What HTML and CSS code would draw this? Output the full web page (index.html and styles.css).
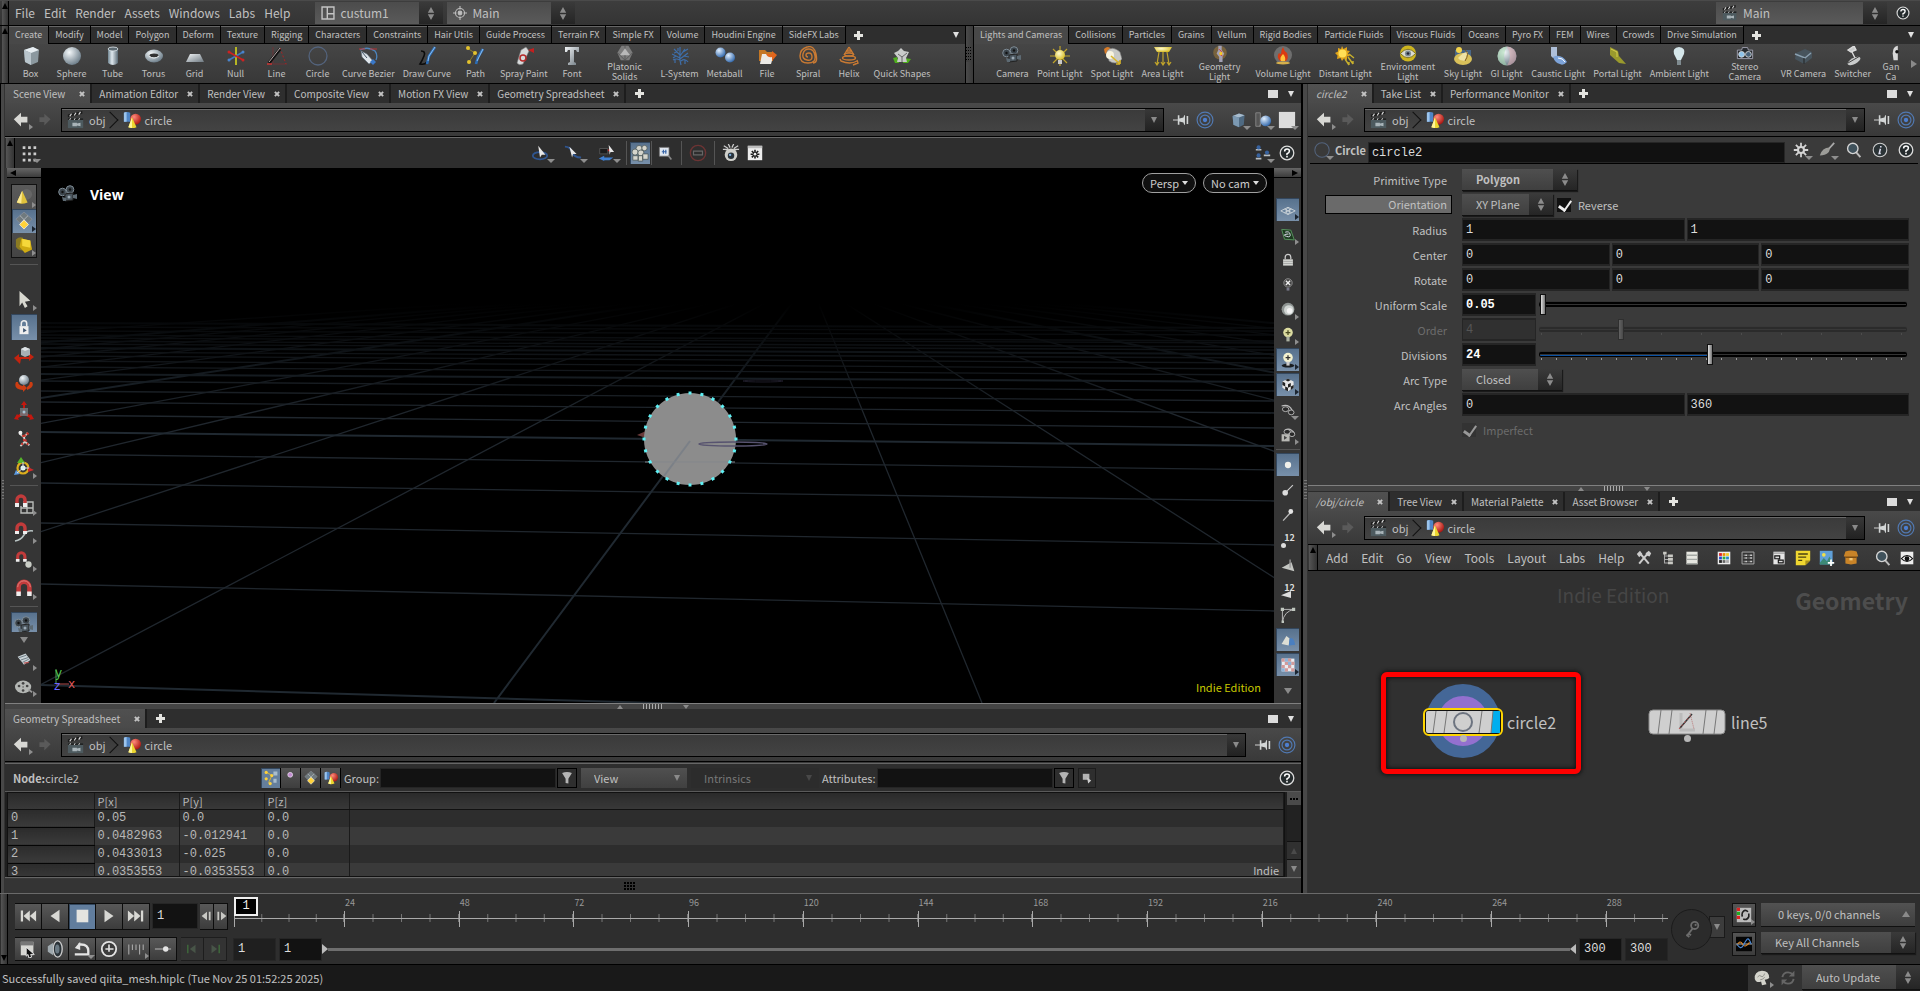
FILE: index.html
```html
<!DOCTYPE html>
<html lang="en">
<head>
<meta charset="utf-8">
<title>qiita_mesh.hiplc</title>
<link rel="stylesheet" href="styles.css">
</head>
<body>
<svg class="defs" aria-hidden="true">
  <defs>
    <linearGradient id="gs" x1="0" y1="0" x2="1" y2="1"><stop offset="0" stop-color="#f2f5f7"/><stop offset="1" stop-color="#6d7880"/></linearGradient>
    <linearGradient id="gt" x1="0" y1="0" x2="1" y2="0"><stop offset="0" stop-color="#6f8490"/><stop offset=".4" stop-color="#dfe8ee"/><stop offset="1" stop-color="#5a6a75"/></linearGradient>
    <radialGradient id="gb" cx=".35" cy=".3" r=".75"><stop offset="0" stop-color="#f4f8fa"/><stop offset="1" stop-color="#697a86"/></radialGradient>
    <radialGradient id="gblue" cx=".35" cy=".3" r=".75"><stop offset="0" stop-color="#e2f0ff"/><stop offset="1" stop-color="#2c63a8"/></radialGradient>
    <radialGradient id="gred" cx=".35" cy=".3" r=".75"><stop offset="0" stop-color="#ff8a7a"/><stop offset="1" stop-color="#a81410"/></radialGradient>
    <radialGradient id="gyel" cx=".4" cy=".35" r=".7"><stop offset="0" stop-color="#fffbd0"/><stop offset="1" stop-color="#d6b91c"/></radialGradient>
    <linearGradient id="fade" x1="0" y1="0" x2="0" y2="1"><stop offset="0" stop-color="#000"/><stop offset=".24" stop-color="#000"/><stop offset=".5" stop-color="#000" stop-opacity=".6"/><stop offset="1" stop-color="#000" stop-opacity="0"/></linearGradient>
  </defs>
  <symbol id="box" viewBox="0 0 20 20"><path d="M3 4l9-3 6 3-1 12-7 3-6-3z" fill="#8b989f"/><path d="M3 4l9-3 6 3-8 3z" fill="#e6edf1"/><path d="M3 4l7 3v12l-6-3z" fill="#b9c5cc"/></symbol>
  <symbol id="sphere" viewBox="0 0 20 20"><circle cx="10" cy="10" r="9" fill="url(#gb)"/></symbol>
  <symbol id="tube" viewBox="0 0 20 20"><path d="M5 3v14q5 4 10 0V3z" fill="url(#gt)"/><ellipse cx="10" cy="3" rx="5" ry="2" fill="#5d6a72" stroke="#dfe8ee" stroke-width=".8"/></symbol>
  <symbol id="torus" viewBox="0 0 20 20"><ellipse cx="10" cy="10" rx="9" ry="6.500" fill="url(#gb)"/><ellipse cx="10" cy="9.500" rx="4.500" ry="2" fill="#333"/><path d="M5 10q5 4 10 0" fill="none" stroke="#eef3f5"/></symbol>
  <symbol id="grid" viewBox="0 0 20 20"><path d="M5 8h10l4 8H1z" fill="url(#gs)"/></symbol>
  <symbol id="null" viewBox="0 0 20 20"><path d="M10 1v18" stroke="#b6b624" stroke-width="2"/><path d="M3 14L17 6" stroke="#3d78c2" stroke-width="1.500"/><path d="M3 6l14 8" stroke="#c22" stroke-width="1.500"/><circle cx="3" cy="6" r="1.500" fill="#c22"/><circle cx="17" cy="14" r="1.500" fill="#c22"/><circle cx="3" cy="14" r="1.500" fill="#4a84cc"/><circle cx="17" cy="6" r="1.500" fill="#4a84cc"/></symbol>
  <symbol id="line" viewBox="0 0 20 20"><path d="M6 1v17h14" fill="none" stroke="#6d3336"/><path d="M13 2l6 16" stroke="#a22" stroke-dasharray="2 2"/><path d="M2 17L13 3" stroke="#111" stroke-width="3"/><path d="M2 16L13 2" stroke="#b9a9a9" stroke-width="1"/><path d="M0 18h5" stroke="#c33" stroke-width="1.500"/></symbol>
  <symbol id="circ" viewBox="0 0 20 20"><circle cx="10" cy="10" r="9" fill="none" stroke="#53637c" stroke-width="1.300"/></symbol>
  <symbol id="bezier" viewBox="0 0 20 20"><path d="M2 4q8-4 15 1 3 4 1 9" fill="none" stroke="#4d85bd" stroke-width="1.300"/><path d="M1 3h6M12 3h7" stroke="#b33"/><path d="M3 5l6 3 6 7-4 3-7-7z" fill="#dfe5ea" stroke="#5c6c7a" stroke-width=".6"/><path d="M4 6l5 6" stroke="#456"/><path d="M12 16l3 3 3-3-3-3z" fill="#3a78c8"/></symbol>
  <symbol id="draw" viewBox="0 0 20 20"><path d="M4 5q5 0 3 5t-4 8q5 1 7-2" fill="none" stroke="#0b0b0b" stroke-width="1.600"/><path d="M18 1l-6 9-2 8" stroke="#2b6cb5" stroke-width="2.600" fill="none"/><path d="M18 1l-6 9-1 5" stroke="#8fc0ee" stroke-width="1" fill="none"/></symbol>
  <symbol id="pathi" viewBox="0 0 20 20"><path d="M2 2l8 5-6 9" fill="none" stroke="#8b7a2a"/><circle cx="3" cy="2" r="2" fill="#e3c22d"/><circle cx="10" cy="7" r="2" fill="#e3c22d"/><circle cx="4" cy="16" r="2" fill="#e3c22d"/><path d="M18 3l-5 8-2 7" stroke="#2b6cb5" stroke-width="2.600" fill="none"/><path d="M18 3l-6 12" stroke="#8fc0ee" stroke-width="1"/></symbol>
  <symbol id="spray" viewBox="0 0 20 20"><path d="M7 4l5-3 3 4-6 13q-4 2-6-1z" fill="#d7dadb" stroke="#777" stroke-width=".6"/><circle cx="9" cy="12" r="3" fill="none" stroke="#b52a2a" stroke-width="1.500"/><path d="M14 4l6-2v5z" fill="#c41f1f"/></symbol>
  <symbol id="fonti" viewBox="0 0 20 20"><path d="M3 1h14v5h-2l-1-2h-2v12l2 1v2H6v-2l2-1V4H6L5 6H3z" fill="url(#gs)"/></symbol>
  <symbol id="plat" viewBox="0 0 20 20"><path d="M6 1h8l5 8-4 9H5L1 9z" fill="#7c7c7c"/><path d="M10 4l6 8H4z" fill="#b9b9b9"/><path d="M10 4V1M16 12l3-3M4 12L1 9M10 12v6M4 12l6 6 6-6" stroke="#555" fill="none"/></symbol>
  <symbol id="lsys" viewBox="0 0 20 20"><path d="M11 19q-2-6-1-11V1M10 9L4 3M10 12L2 8M10 14q-4-2-7 0M10 10l5-7M10 13l8-6M11 15q4-3 7 1M7 6L4 7M6 10l-3 2M13 6l5-3M14 10l5 1M5 13v4M15 14v4M8 5l0-3" fill="none" stroke="#3e6ea9" stroke-width="1.200"/></symbol>
  <symbol id="meta" viewBox="0 0 20 20"><circle cx="5.500" cy="6.500" r="5" fill="url(#gblue)"/><circle cx="15" cy="11.500" r="5" fill="url(#gblue)"/></symbol>
  <symbol id="file" viewBox="0 0 20 20"><path d="M2 4h6l2 2h6v9H2z" fill="#c47725"/><path d="M3 18L5 8h12l-3 10z" fill="#eceae5"/><path d="M9 8h6V5l5 4-5 6v-4q-4 1-6-3z" fill="#e2661c"/></symbol>
  <symbol id="spiral" viewBox="0 0 20 20"><path d="M10 11q-2 0-2-2t3-2 3 4-5 3-4-6 6-5 6 7-7 7-8-7 7-9 9 7-3 9" fill="none" stroke="#c97a33" stroke-width="1.400"/></symbol>
  <symbol id="helix" viewBox="0 0 20 20"><g fill="none" stroke="#c97a33" stroke-width="1.400"><path d="M10 1L5 9M10 1l5 8"/><ellipse cx="10" cy="5" rx="2.500" ry="1"/><ellipse cx="10" cy="8.500" rx="4.500" ry="1.500"/><ellipse cx="10" cy="12" rx="6.500" ry="2"/><path d="M18 15q-7 4-16 0l-1-2M18 14l1 3-5 2"/></g></symbol>
  <symbol id="quick" viewBox="0 0 20 20"><path d="M1 12l4-1 2 6H3zM12 12l7 1-3 4h-5z" fill="#4fae1e"/><path d="M6 5l3-3 3 3 5 1-3 6 1 4H5l1-4-4-5z" fill="#c9cbca"/><path d="M6 8l4 3 5-4M10 11v5" stroke="#666" fill="none"/></symbol>
  <symbol id="cam" viewBox="0 0 20 20"><circle cx="4.500" cy="7" r="3.800" fill="#3b444b" stroke="#7f8c96"/><circle cx="12" cy="4.500" r="3.800" fill="#3b444b" stroke="#7f8c96"/><circle cx="12" cy="4.500" r="1.200" fill="#111"/><circle cx="4.500" cy="7" r="1.200" fill="#111"/><path d="M7 9l8-1v7l-8 1z" fill="#4b565e" stroke="#222"/><path d="M15 10l4-1v5l-4-1zM4 12l4 1v3H5z" fill="#5d6a73"/><circle cx="11" cy="12" r="1.500" fill="#9aa8b3"/></symbol>
  <symbol id="ptl" viewBox="0 0 20 20"><path d="M10 0v20M0 10h20M3 3l14 14M17 3L3 17" stroke="#bfa32b" stroke-width="1.200"/><circle cx="10" cy="9" r="5" fill="url(#gyel)"/><path d="M8 14h4v4H8z" fill="#c9c9c9"/></symbol>
  <symbol id="spot" viewBox="0 0 20 20"><path d="M2 3q4-4 7 0L3 8z" fill="#d97c28"/><path d="M5 5q5-6 13 1l2 7q-6 7-13 2z" fill="#c8c9c6" stroke="#777" stroke-width=".6"/><circle cx="8" cy="9" r="4" fill="#f7f3df"/><path d="M9 10l9 8M18 18v-4M18 18h-4" stroke="#d8b52a" stroke-width="1.600"/></symbol>
  <symbol id="area" viewBox="0 0 20 20"><path d="M1 1h18l-3 5H4z" fill="url(#gyel)"/><path d="M6 6L4 18M10 6v12M14 6l2 12M2 16l2 3 2-3M8 16l2 3 2-3M14 16l2 3 2-3" fill="none" stroke="#bfa32b" stroke-width="1.200"/></symbol>
  <symbol id="geol" viewBox="0 0 20 20"><circle cx="10" cy="9" r="8" fill="#b98a35" opacity=".45"/><path d="M8 1h4v5l3 4-2 4v6H9v-6l-3-4 2-4z" fill="#a3a0b3"/><path d="M9 5l3 3-2 3 3 2" stroke="#d22" fill="none"/><circle cx="11" cy="10" r="2" fill="#f5c62a"/></symbol>
  <symbol id="voll" viewBox="0 0 20 20"><circle cx="10" cy="9" r="9" fill="#6e6e6e"/><path d="M10 1q1 4 4 6 2 5-1 8H7q-4-4-1-8 1 1 2 1 0-4 2-7z" fill="#d93a12"/><path d="M10 8q3 3 2 7H8q-2-3 2-7z" fill="#ffc23a"/><ellipse cx="10" cy="17" rx="7" ry="1.500" fill="#d6b04b"/></symbol>
  <symbol id="dist" viewBox="0 0 20 20"><path d="M7 0l1.500 3L12 1l0 3.500 3 .5-2 2.500 2 2.500-3 .5V14l-3-1.500L7 15l-1.500-3L2 13l.500-3.500L0 7l3-1.500V2l3 1z" fill="#e0a41a"/><circle cx="7.500" cy="7.500" r="4" fill="#ffdf56"/><path d="M10 13l4 6M13 11l5 7M14 8l5 4M14 19v-3M18 18v-3" stroke="#c9b12c" stroke-width="1.400"/></symbol>
  <symbol id="env" viewBox="0 0 20 20"><circle cx="10" cy="10" r="9.500" fill="#cdb51f"/><path d="M1 10Q10 0 19 10 10 20 1 10z" fill="#dcdcd2" stroke="#6f6414"/><circle cx="10" cy="10" r="3.600" fill="#7d8d95"/><circle cx="10" cy="10" r="1.600" fill="#223"/></symbol>
  <symbol id="sky" viewBox="0 0 20 20"><path d="M2 4h16v6H2z" fill="#4f81b8" opacity=".6"/><circle cx="6" cy="4" r="3" fill="#f3d34b"/><ellipse cx="10" cy="13" rx="9" ry="6" fill="#d9c15a"/><path d="M5 12q6-7 10-6l-3 9-5-1z" fill="#efe3a4"/><path d="M12 4q5 3 0 11" stroke="#7c5a22" fill="none"/></symbol>
  <symbol id="gi" viewBox="0 0 20 20"><circle cx="10" cy="10" r="9.500" fill="url(#gb)"/><path d="M10 .500a9.500 9.500 0 010 19q6-9 0-19z" fill="#e5a9b0" opacity=".5"/><path d="M10 .500a9.500 9.500 0 000 19q-6-9 0-19z" fill="#a5dcae" opacity=".5"/></symbol>
  <symbol id="caus" viewBox="0 0 20 20"><path d="M3 1h6v9l-4 2-2-2z" fill="#aebfd9"/><path d="M5 11q8-4 14 5-4 4-7 2-5-1-7-7z" fill="#7da3d8"/><path d="M10 12q5 0 7 4" stroke="#fff" fill="none"/></symbol>
  <symbol id="port" viewBox="0 0 20 20"><path d="M3 1l8 4 1 5 7 8-7-1-9-8z" fill="#9a9a2d"/><path d="M4 3l6 3v5" fill="none" stroke="#d6cf4f"/></symbol>
  <symbol id="amb" viewBox="0 0 20 20"><path d="M10 1q7 1 5 7l-3 6H8L5 8q-2-6 5-7z" fill="#d5e6ea"/><path d="M8 14h4v5H8z" fill="#7f8b90"/></symbol>
  <symbol id="ster" viewBox="0 0 20 20"><path d="M1 6h5l1-3h6l1 3h5v10H1z" fill="#262a2e" stroke="#aab"/><circle cx="6" cy="11" r="3.400" fill="#8ec3ea" stroke="#ddd"/><circle cx="14" cy="11" r="3.400" fill="#48627a" stroke="#ddd"/></symbol>
  <symbol id="vr" viewBox="0 0 20 20"><path d="M3 7l9-4 7 3v6l-8 6-9-5z" fill="#47545d"/><path d="M2 8l10 4 6-5" fill="none" stroke="#8ba0b0" stroke-width="1.500"/><path d="M11 12v6" stroke="#222"/></symbol>
  <symbol id="swi" viewBox="0 0 20 20"><path d="M5 4l6-4 2 4-5 2zM9 6l3 6" fill="#c9cbcb" stroke="#ddd" stroke-width="1.400"/><ellipse cx="11" cy="15" rx="7" ry="3" transform="rotate(-28 11 15)" fill="#c9cbcb"/><path d="M5 17l12-7" stroke="#444"/></symbol>
  <symbol id="game" viewBox="0 0 20 20"><path d="M18 1q-6 1-6 9l1 8h5z" fill="#d9d9d9"/><circle cx="17" cy="8" r="2" fill="#111"/></symbol>
  <symbol id="layout" viewBox="0 0 20 20"><path d="M1.500 1.500h17v17h-17zM9 1.500v17M9 11h9.500" fill="none" stroke="#c4c4c4" stroke-width="2"/></symbol>
  <symbol id="cross" viewBox="0 0 20 20"><g fill="none" stroke="#bdbdbd" stroke-width="1.600"><circle cx="10" cy="10" r="6.500"/><circle cx="10" cy="10" r="2.600" fill="#bdbdbd"/><path d="M10 0v5M10 15v5M0 10h5M15 10h5"/></g></symbol>
  <symbol id="clap" viewBox="0 0 20 20"><path d="M1 8h17v11H1z" fill="#4d5a5f"/><path d="M1 4l16-4v3L1 7z" fill="#1b1b1b"/><path d="M3 6l2-3M8 5l2-3M13 4l2-3" stroke="#ddd" stroke-width="1.300"/><path d="M1 8h17v2H1z" fill="#222"/><path d="M3 10l1-2M8 10l1-2M13 10l1-2" stroke="#ddd"/><path d="M6 13h5v4H6zM11 14l4-1v4l-4-1z" fill="#a9b4b9"/></symbol>
  <symbol id="shapes" viewBox="0 0 20 20"><path d="M1 2q4-2 7 0v10H1z" fill="#4f86c7"/><path d="M1 2q1-1 3-1v11H1z" fill="#9cc4ec"/><circle cx="14" cy="9" r="6" fill="url(#gred)"/><path d="M10 7l5 11q-5 2-9 0z" fill="#ecd62f"/><path d="M10 7v12l-4-1z" fill="#fff69b"/></symbol>
  <symbol id="back" viewBox="0 0 20 20"><path d="M1 9l9-8v5h8v7h-8v5z" fill="#d8d8d4"/></symbol>
  <symbol id="fwd" viewBox="0 0 20 20"><path d="M18 9l-9-8v5H2v7h7v5z" fill="#5a5a5a"/></symbol>
  <symbol id="pin" viewBox="0 0 20 20"><path d="M0 10h7" stroke="#ccc" stroke-width="1.300"/><path d="M6 4h2v4l5-1 1-3h1v12h-1l-1-3-5-1v4H6zM17 5h2v10h-2z" fill="#d2d5d5"/></symbol>
  <symbol id="target" viewBox="0 0 20 20"><g fill="none" stroke="#5179b2" stroke-width="1.300"><circle cx="10" cy="10" r="8.800"/><circle cx="10" cy="10" r="5.500"/></g><circle cx="10" cy="10" r="2.400" fill="#4d7fd0"/></symbol>
  <symbol id="bcube" viewBox="0 0 20 20"><path d="M2 5l8-3 7 2-1 12-6 3-7-3z" fill="#4f6a82"/><path d="M2 5l8-3 7 2-7 3z" fill="#a8bccd"/><path d="M2 5l8 2v12l-7-3z" fill="#7c99b2"/></symbol>
  <symbol id="ghost" viewBox="0 0 20 20"><path d="M2 2h5v15H2zM6 17l5-9" fill="#555" stroke="#888"/><circle cx="13" cy="11" r="6" fill="url(#gblue)"/></symbol>
  <symbol id="white" viewBox="0 0 20 20"><path d="M1 1h18v18H1z" fill="#dcdcdc"/></symbol>
  <symbol id="dots" viewBox="0 0 20 20"><path d="M3 4h15M3 11h15M3 18h15" stroke="#ccc" stroke-width="3" stroke-dasharray="3 3"/></symbol>
  <symbol id="orb" viewBox="0 0 20 20"><ellipse cx="10" cy="13" rx="8" ry="4" fill="none" stroke="#2f5590" stroke-width="2"/><path d="M8 2l8 10-4 0-2 3z" fill="#e8e8e8"/></symbol>
  <symbol id="pan" viewBox="0 0 20 20"><path d="M1 3q6 0 8 6t10 6" fill="none" stroke="#2f5590" stroke-width="2"/><path d="M6 3l8 8-4 0-1 4z" fill="#e8e8e8"/></symbol>
  <symbol id="dolly" viewBox="0 0 20 20"><path d="M3 5h9v6H3z" fill="#1b1b1b" stroke="#555"/><path d="M12 7h3" stroke="#b22" stroke-width="2"/><path d="M2 16l6-3v2h10l-4 3H8v1z" fill="#3f7fd0"/><path d="M13 1l6 8-4 0-1 3z" fill="#e8e8e8"/></symbol>
  <symbol id="cubes" viewBox="0 0 20 20"><g fill="#d5d5cc" stroke="#4e5a5c" stroke-width=".9"><circle cx="9" cy="5" r="3.400"/><circle cx="15" cy="4.500" r="3"/><circle cx="4.500" cy="9" r="3.400"/><circle cx="11" cy="10" r="3.400"/><path d="M2 13h6v5H2zM8 13h5v6H8zM13 11h6v6h-6z"/></g></symbol>
  <symbol id="zoomr" viewBox="0 0 20 20"><path d="M3 3h12v11H3z" fill="#dfe6ee" stroke="#777"/><path d="M6 8.500h6M8 6v5M11 6v5" stroke="#3462a6" stroke-width="1.400"/><path d="M14 13l4 5" stroke="#888" stroke-width="2"/></symbol>
  <symbol id="stopr" viewBox="0 0 20 20"><circle cx="10" cy="10" r="8.500" fill="none" stroke="#6d3434" stroke-width="1.500"/><path d="M5 8h10v4H5z" fill="none" stroke="#666" stroke-width="1.300"/></symbol>
  <symbol id="bug" viewBox="0 0 20 20"><path d="M2 2l5 3M18 2l-5 3M1 6l6 0M19 6h-6M7 0l2 4M13 0l-2 4" stroke="#ccc" stroke-width="1.400"/><circle cx="10" cy="12" r="7" fill="#cfcfca"/><circle cx="10" cy="13" r="3.600" fill="#28323a"/><circle cx="9" cy="12" r="1.300" fill="#7fb0de"/></symbol>
  <symbol id="gearw" viewBox="0 0 20 20"><path d="M1 1h18v18H1z" fill="#ececec"/><path d="M1 1h18v3H1z" fill="#bbb"/><path d="M10 6v11M4.500 11.500h11M6 7.500l8 8M14 7.500l-8 8" stroke="#1a1a1a" stroke-width="2"/><circle cx="10" cy="11.500" r="1.700" fill="#ececec"/></symbol>
  <symbol id="people" viewBox="0 0 20 20"><g fill="#b9bfc4"><path d="M1 7h7v-2H1zM1 18h7v-2H1zM11 14h8v-2h-8z"/></g><circle cx="4.500" cy="3" r="2.600" fill="#37629f"/><circle cx="4.500" cy="13" r="2.600" fill="#37629f"/><circle cx="15" cy="9.500" r="2.600" fill="#37629f"/></symbol>
  <symbol id="help" viewBox="0 0 20 20"><circle cx="10" cy="10" r="8.500" fill="#252b2d" stroke="#dcdcdc" stroke-width="1.600"/><path d="M7 8q0-3 3-3t3 2.500-3 3.500v1.500M10 13.500v2" fill="none" stroke="#fff" stroke-width="1.900"/></symbol>
  <symbol id="info" viewBox="0 0 20 20"><circle cx="10" cy="10" r="8.500" fill="#2b3336" stroke="#cfcfcf" stroke-width="1.400"/><path d="M11 5v2M10.500 8.500L9 14.500h2" fill="none" stroke="#dde" stroke-width="1.900"/></symbol>
  <symbol id="gear" viewBox="0 0 20 20"><path d="M10 1v18M1 10h18M3.600 3.600l12.800 12.800M16.400 3.600L3.600 16.400" stroke="#d4d4d4" stroke-width="2.200"/><circle cx="10" cy="10" r="5" fill="#d4d4d4"/><circle cx="10" cy="10" r="2.400" fill="#3a3a3a"/></symbol>
  <symbol id="brush" viewBox="0 0 20 20"><path d="M19 1l-8 9" stroke="#aaa" stroke-width="2.200"/><path d="M13 7q2 9-12 10 3-10 12-10z" fill="#9c9c98"/></symbol>
  <symbol id="mag" viewBox="0 0 20 20"><path d="M12 12l6 7" stroke="#bdbdbd" stroke-width="2.400"/><circle cx="8.500" cy="8" r="6.500" fill="#40525c" stroke="#d5d5d5" stroke-width="1.700"/></symbol>
  <symbol id="selobj" viewBox="0 0 20 20"><circle cx="13" cy="7" r="6" fill="#666"/><path d="M8 3l6 13q-7 3-12 0z" fill="#e0c23c"/><path d="M8 3l-1 14-5-1z" fill="#fbe994"/></symbol>
  <symbol id="selpt" viewBox="0 0 20 20"><path d="M10 0l9 8-9 9-9-9z" fill="#707a7e" stroke="#aab" stroke-width=".4"/><path d="M5.500 4l9 9M14.500 4l-9 9" stroke="#b5babd"/><path d="M10 9l5 5-5 5-5-5z" fill="#ffd23a" stroke="#fff" stroke-width=".7"/></symbol>
  <symbol id="seldy" viewBox="0 0 20 20"><path d="M1 4q4-4 8-2v14q-6 0-8-4z" fill="#8b7b22"/><path d="M7 3l10 2 2 10-8 4-6-7z" fill="#cfab12"/><path d="M8 3l9 2 0 8-9-2z" fill="#f5d83a"/></symbol>
  <symbol id="arrow" viewBox="0 0 20 20"><path d="M5 1l12 11-6 1 3 5-3 2-3-6-3 4z" fill="#d8d8d0"/></symbol>
  <symbol id="lockw" viewBox="0 0 20 20"><path d="M7 9V6a3 3 0 016 0v3" fill="none" stroke="#eee" stroke-width="1.700"/><path d="M5 9h10v9H5z" fill="#eee"/><path d="M9 11l4 3-4 2z" fill="#3e5570"/></symbol>
  <symbol id="mv" viewBox="0 0 20 20"><path d="M0 13l5-4v3h10l0-4 5 4-5 4v-2H7l-1 5z" fill="#c3230f"/><path d="M7 4l4-2 5 2v6l-5 2-4-2z" fill="#a7b1b6"/><path d="M7 4l4-2 5 2-5 2z" fill="#dde3e6"/></symbol>
  <symbol id="rot" viewBox="0 0 20 20"><path d="M2 9q-3 7 7 8l0 2 4-4-4-4v2q-5-1-5-4zM18 9q3 5-5 8v-3q3-2 3-5z" fill="#cc3d12"/><circle cx="10" cy="7" r="5" fill="url(#gb)"/></symbol>
  <symbol id="scl" viewBox="0 0 20 20"><path d="M10 0l3 4h-2v7l5 3 1-1 3 5-5 1 1-2-6-3-6 3 1 2-5-1 3-5 1 1 5-3V4H7z" fill="#c3180f"/><path d="M6 7h8v8H6z" fill="#70777b" opacity=".85"/><circle cx="10" cy="11" r="1.500" fill="#a9c3d6"/></symbol>
  <symbol id="pose" viewBox="0 0 20 20"><path d="M5 4l5 4 4-5M10 8l1 5-5 5M11 13l5 4" fill="none" stroke="#d0d0cc" stroke-width="2"/><path d="M8 7l4-1M9 11l4 1M7 15l2 1M13 15l2 1M13 3l2 2" stroke="#c6332a" stroke-width="2.400"/><circle cx="6" cy="3" r="2.200" fill="#eee"/></symbol>
  <symbol id="hnd" viewBox="0 0 20 20"><circle cx="9" cy="11" r="5.500" fill="none" stroke="#dcae1e" stroke-width="2.200"/><path d="M7 0l4 6H3z" fill="#55b52a"/><path d="M20 13l-6-3v5z" fill="#cc2a2a"/><path d="M0 18l2-5 4 4z" fill="#5b9ae0"/><circle cx="9" cy="11" r="2.500" fill="#dfe"/><path d="M9 11V5M9 11h6M9 11l-6 5" stroke="#dde"/></symbol>
  <symbol id="magnet" viewBox="0 0 20 20"><path d="M4 17V9a6 6 0 0112 0v8" fill="none" stroke="#c23b3b" stroke-width="5"/><path d="M3 9a7 7 0 0114 0" fill="none" stroke="#e58a84" stroke-width="1"/><path d="M1.500 14h5v5h-5zM13.500 14h5v5h-5z" fill="#eee"/></symbol>
  <symbol id="mgrid" viewBox="0 0 20 20"><path d="M9 8h10v11H7V12M7 14h12M13 8v11" fill="none" stroke="#b9bcb9" stroke-width="1.400"/><path d="M3 11V6a4 4 0 018 0v5" fill="none" stroke="#c23b3b" stroke-width="3.400"/><path d="M1 9h4v4H1zM9 9h4v4H9z" fill="#eee"/></symbol>
  <symbol id="mcurve" viewBox="0 0 20 20"><path d="M1 19q6-1 9-6t9-4" fill="none" stroke="#b9c4c4" stroke-width="1.500"/><path d="M3 10V6a4 4 0 018 0v4" fill="none" stroke="#c23b3b" stroke-width="3.400"/><path d="M1 9h4v3H1zM9 9h4v3H9z" fill="#eee"/></symbol>
  <symbol id="mpt" viewBox="0 0 20 20"><circle cx="15" cy="15" r="3.500" fill="#c9cdc6"/><path d="M3 10V6a4 4 0 018 0v4" fill="none" stroke="#c23b3b" stroke-width="3.400"/><path d="M1 9h4v3H1zM9 9h4v3H9z" fill="#eee"/></symbol>
  <symbol id="clip" viewBox="0 0 20 20"><path d="M2 6l10-4 6 8-8 6z" fill="#c9d2d6"/><path d="M4 7l9-3M6 10l9-3M8 13l8-4" stroke="#5b6b73"/><path d="M10 14l6-1" stroke="#b55" stroke-width="1.500"/></symbol>
  <symbol id="reel" viewBox="0 0 20 20"><ellipse cx="9" cy="11" rx="9" ry="7" fill="#b4b7b4"/><g fill="#444"><circle cx="9" cy="7" r="1.500"/><circle cx="9" cy="15" r="1.500"/><circle cx="4.500" cy="10" r="1.500"/><circle cx="13.500" cy="10" r="1.500"/><circle cx="9" cy="11" r=".8"/></g><path d="M15 14l4 3" stroke="#999" stroke-width="2"/></symbol>
  <symbol id="plane" viewBox="0 0 20 20"><path d="M2 11l8-4 8 4-8 4zM6 9l8 4M14 9l-8 4M10 7q-4 4 0 8 4-4 0-8" fill="none" stroke="#cdd5da"/></symbol>
  <symbol id="cplane" viewBox="0 0 20 20"><path d="M1 2l13 1 5 14-14-1z" fill="#1d3a20" stroke="#5b9a61" stroke-width="1.300"/><path d="M6 6q6-2 7 3t-5 3-1-3 4 0" fill="none" stroke="#dde" stroke-width="1.400"/></symbol>
  <symbol id="lock" viewBox="0 0 20 20"><path d="M6 9V6a4 4 0 018 0v3" fill="none" stroke="#ccc" stroke-width="1.800"/><path d="M3 9h14v9H3z" fill="#d4d6d2"/><path d="M3 12h14M3 15h14" stroke="#999"/></symbol>
  <symbol id="bulbx" viewBox="0 0 20 20"><circle cx="10" cy="7" r="6" fill="#444" stroke="#aaa"/><path d="M7 4l6 6M13 4l-6 6" stroke="#eee" stroke-width="2"/><path d="M8 14h4v4H8z" fill="#778"/></symbol>
  <symbol id="bulb2" viewBox="0 0 20 20"><circle cx="10" cy="9" r="8" fill="#8e9492"/><circle cx="11" cy="10" r="6" fill="#cfd4d2"/><circle cx="12" cy="11" r="3.500" fill="#f3f3f3"/></symbol>
  <symbol id="bulby" viewBox="0 0 20 20"><circle cx="10" cy="7" r="6" fill="#dcdca0"/><path d="M7 7h6M10 4v6" stroke="#4a4a22" stroke-width="1.600"/><path d="M8 12h4v6H8z" fill="#aab0a0"/></symbol>
  <symbol id="bulbs" viewBox="0 0 20 20"><ellipse cx="10" cy="17" rx="8" ry="2.500" fill="#1a1d20"/><circle cx="10" cy="7" r="6" fill="#f3f1cf"/><path d="M7 7h6M10 4v6" stroke="#333" stroke-width="1.600"/><path d="M8 12h4v5H8z" fill="#ccc"/></symbol>
  <symbol id="check" viewBox="0 0 20 20"><path d="M2 5l8-4 8 4v9l-8 5-8-5z" fill="#e6e6e6"/><path d="M6 3l4 2 4-2-4-2zM2 5l4 2v5l-4-2zM10 9l4-2v5l-4 2zM6 12l4 2v5l-4-2zM14 12l4-2v4l-4 3z" fill="#222"/></symbol>
  <symbol id="glass" viewBox="0 0 20 20"><path d="M2 5q9-3 13 5l1 5" fill="none" stroke="#bbb" stroke-width="1.400"/><ellipse cx="7" cy="9" rx="4" ry="3" fill="#2a2a2a" stroke="#ccc"/><ellipse cx="14" cy="13" rx="3.500" ry="3" fill="#2a2a2a" stroke="#ccc"/></symbol>
  <symbol id="glass2" viewBox="0 0 20 20"><path d="M6 4q7-4 12 4" fill="none" stroke="#bbb" stroke-width="1.400"/><ellipse cx="9" cy="6" rx="4" ry="3" fill="#2a2a2a" stroke="#ccc"/><ellipse cx="15" cy="9" rx="3.500" ry="3" fill="#2a2a2a" stroke="#ccc"/><path d="M2 9h10v9H2z" fill="#b8b8b4"/><path d="M5 11l4 2.500-4 2.500z" fill="#444"/></symbol>
  <symbol id="pt" viewBox="0 0 20 20"><circle cx="10" cy="10" r="3.500" fill="#f0f0ea"/></symbol>
  <symbol id="ptn" viewBox="0 0 20 20"><path d="M7 13L17 3" stroke="#ccc" stroke-width="1.600"/><circle cx="6" cy="14" r="4" fill="#ddd"/></symbol>
  <symbol id="ptv" viewBox="0 0 20 20"><path d="M3 18L14 6" stroke="#bbb" stroke-width="1.800"/><circle cx="14" cy="5" r="3.400" fill="#e4e4e4"/></symbol>
  <symbol id="prim" viewBox="0 0 20 20"><path d="M1 14l14-8 4 13z" fill="#c4c6c2"/><path d="M13 14V2" stroke="#999" stroke-width="2"/></symbol>
  <symbol id="hull" viewBox="0 0 20 20"><path d="M3 19V3h15M3 19q2-14 15-16" fill="none" stroke="#bbb" stroke-width="1.200"/><path d="M1 1h4v4H1zM15 1h4v4h-4zM2 17h3v3H2z" fill="#bfc6be"/></symbol>
  <symbol id="face" viewBox="0 0 20 20"><path d="M2 15L8 5l4 3-1 9z" fill="#ddded5"/><path d="M12 8q5-3 7 8l-8 1z" fill="#4a7fc0"/></symbol>
  <symbol id="chk2" viewBox="0 0 20 20"><path d="M2 2h16v16H2z" fill="#e9edf2"/><path d="M2 2h4v4H2zM10 2h4v4h-4zM6 6h4v4H6zM14 6h4v4h-4zM2 10h4v4H2zM10 10h4v4h-4zM6 14h4v4H6zM14 14h4v4h-4z" fill="#d39a9a"/><path d="M6 2h4v4H6zM2 14h4v4H2zM10 6h4v4h-4z" fill="#8fb4d8"/></symbol>
  <symbol id="spts" viewBox="0 0 20 20"><path d="M5 3l6 4-4 9" fill="none" stroke="#e8c02c"/><g fill="#ffd23a"><circle cx="4" cy="3" r="2"/><circle cx="11" cy="7" r="2"/><circle cx="4" cy="11" r="2"/><circle cx="9" cy="17" r="2"/></g><path d="M13 2h5v5h-5zM13 11h4v5h-4z" fill="#a9bdcc"/></symbol>
  <symbol id="svtx" viewBox="0 0 20 20"><circle cx="9" cy="6" r="3" fill="#c28bd0" stroke="#eadcf0"/></symbol>
  <symbol id="funnel" viewBox="0 0 20 20"><path d="M3 3q7-3 14 0l-5 8v7l-4-1v-6z" fill="#b4b4b4"/></symbol>
  <symbol id="menuo" viewBox="0 0 20 20"><path d="M3 3h11v10H3z" fill="#b4b4b4"/><path d="M10 9l7 5-5 5z" fill="#ccc"/></symbol>
  <symbol id="first" viewBox="0 0 20 20"><path d="M2 4h2.500v12H2zM12 4v12l-7-6zM19 4v12l-7-6z" fill="#d8d8d4"/></symbol>
  <symbol id="prev" viewBox="0 0 20 20"><path d="M15 3v14L5 10z" fill="#d8d8d4"/></symbol>
  <symbol id="stop" viewBox="0 0 20 20"><path d="M4 3h13v14H4z" fill="#e4e4e0"/></symbol>
  <symbol id="play" viewBox="0 0 20 20"><path d="M5 3v14l10-7z" fill="#d8d8d4"/></symbol>
  <symbol id="last" viewBox="0 0 20 20"><path d="M18 4h-2.500v12H18zM8 4v12l7-6zM1 4v12l7-6z" fill="#d8d8d4"/></symbol>
  <symbol id="stepb" viewBox="0 0 20 20"><path d="M10 3v14L1 10zM13 3h3v14h-3z" fill="#c8c8c4"/></symbol>
  <symbol id="stepf" viewBox="0 0 20 20"><path d="M10 3v14l9-7zM4 3h3v14H4z" fill="#c8c8c4"/></symbol>
  <symbol id="pref" viewBox="0 0 20 20"><path d="M2 2h14v15H2z" fill="#d6d6d2"/><path d="M2 2h14v4H2z" fill="#777"/><path d="M8 8l9 8-4 0 1 3-3 1-1-4-2 2z" fill="#111" stroke="#eee"/></symbol>
  <symbol id="spk" viewBox="0 0 20 20"><ellipse cx="13" cy="10" rx="5" ry="9" fill="#2b3338" stroke="#ccc" stroke-width="1.500"/><ellipse cx="12.500" cy="10" rx="2.500" ry="5" fill="#6b7a84"/><path d="M8 3L2 7v6l6 4z" fill="#9fa9ae"/></symbol>
  <symbol id="undo" viewBox="0 0 20 20"><path d="M2 16h15v-4q0-7-8-7H6" fill="none" stroke="#e4e4e4" stroke-width="2.600"/><path d="M8 2v9l-6-2z" fill="#e4e4e4"/></symbol>
  <symbol id="clock" viewBox="0 0 20 20"><circle cx="10" cy="10" r="8" fill="#3c3c3c" stroke="#e4e4e4" stroke-width="2"/><path d="M6 10h9M10 5v8" stroke="#e4e4e4" stroke-width="1.800"/></symbol>
  <symbol id="ticks" viewBox="0 0 20 20"><path d="M2 5v11M6 5v6M10 5v6M14 5v11M18 5v6" stroke="#aaa" stroke-width="1.200"/></symbol>
  <symbol id="keyd" viewBox="0 0 20 20"><path d="M1 10h18" stroke="#aaa" stroke-width="1.300"/><circle cx="13" cy="10" r="3" fill="#e4e4e4"/></symbol>
  <symbol id="kf" viewBox="0 0 20 20"><path d="M4 4v12" stroke="#3f6a3b" stroke-width="2"/><path d="M15 4v12l-8-6z" fill="#485548"/></symbol>
  <symbol id="kl" viewBox="0 0 20 20"><path d="M16 4v12" stroke="#3f6a3b" stroke-width="2"/><path d="M5 4v12l8-6z" fill="#485548"/></symbol>
  <symbol id="key" viewBox="0 0 20 20"><g fill="none" stroke="#6c6c6c" stroke-width="2"><circle cx="13" cy="6" r="4"/><path d="M11 9l-7 9M6 15l3 2M4 16l3 3"/></g><circle cx="14" cy="5.500" r="1.200" fill="#6c6c6c"/></symbol>
  <symbol id="chan" viewBox="0 0 20 20"><path d="M1 1h18v18H1z" fill="#bbb"/><path d="M1 1h4v4H1z" fill="#d22"/><path d="M1 6h4v4H1z" fill="#2a2"/><path d="M1 11h4v4H1z" fill="#d22"/><path d="M15 6q-4-4-7 1-1 3 0 5M9 15q5 2 7-3V8" fill="none" stroke="#222" stroke-width="2"/></symbol>
  <symbol id="scope" viewBox="0 0 20 20"><path d="M0 1h20v18H0z" fill="#050505"/><path d="M0 10h20" stroke="#ddd"/><path d="M1 12q4-8 7-2t9-2" fill="none" stroke="#e08a2a" stroke-width="1.400"/><path d="M1 10q5 8 8 2t5-8 5 6" fill="none" stroke="#4a8ad8" stroke-width="1.400"/></symbol>
  <symbol id="brain" viewBox="0 0 20 20"><path d="M2 11q-1-8 8-9 8 0 8 8-2 2-5 2l2 5-5 1-1-4q-5 2-7-3z" fill="#d4d4cc"/><path d="M5 9q2-3 4-1t4-3M8 12q3 0 5-3" fill="none" stroke="#8a8a84"/></symbol>
  <symbol id="refresh" viewBox="0 0 20 20"><path d="M3 9q1-6 7-6 4 0 6 3M17 11q-1 6-7 6-4 0-6-3" fill="none" stroke="#666" stroke-width="2.400"/><path d="M18 1v7h-7zM2 19v-7h7z" fill="#666"/></symbol>
  <symbol id="tools" viewBox="0 0 20 20"><path d="M4 3l12 14M15 4L4 17" stroke="#ccc" stroke-width="2.600"/><path d="M12 4l4-3 3 3-2 4-4-1zM1 5l4-4 3 4-4 4z" fill="#ccc"/></symbol>
  <symbol id="tree" viewBox="0 0 20 20"><path d="M5 2v15h5M5 7h5M5 12h5" fill="none" stroke="#aaa" stroke-width="1.500"/><path d="M3 1h5v4H3zM10 5h7v4h-7zM10 10h7v4h-7zM10 15h7v4h-7z" fill="#c9c9c4"/></symbol>
  <symbol id="rows" viewBox="0 0 20 20"><path d="M2 1h16v18H2z" fill="#e6e6e0"/><path d="M2 6h16M2 12h16M2 18h16" stroke="#a4a8a4" stroke-width="2"/></symbol>
  <symbol id="pal" viewBox="0 0 20 20"><path d="M1 1h18v18H1z" fill="#eee"/><path d="M3 3h4v4H3z" fill="#d22"/><path d="M8 3h4v4H8z" fill="#e80"/><path d="M13 3h4v4h-4z" fill="#ec2"/><path d="M3 8h4v4H3z" fill="#24c"/><path d="M8 8h4v4H8z" fill="#3a3"/><path d="M13 8h4v4h-4z" fill="#28c"/><path d="M3 13h4v4H3z" fill="#222"/><path d="M8 13h4v4H8z" fill="#666"/><path d="M13 13h4v4h-4z" fill="#aaa"/></symbol>
  <symbol id="tbl" viewBox="0 0 20 20"><path d="M1.500 1.500h17v17h-17z" fill="#333" stroke="#aaa" stroke-width="1.400"/><path d="M4 6h5M4 10h5M4 15h5M11 6h5M11 10h5M11 15h5" stroke="#ccc" stroke-width="2" stroke-dasharray="1 1 3 9"/></symbol>
  <symbol id="nbox" viewBox="0 0 20 20"><path d="M2 1h16v18H2z" fill="#e6e6e6"/><path d="M2 3h16" stroke="#666"/><path d="M4 7h7v4H4zM9 13h7v4H9z" fill="#ddd" stroke="#111" stroke-width="1.600"/></symbol>
  <symbol id="note" viewBox="0 0 20 20"><path d="M1 1h18v12l-6 6H1z" fill="#f0d730"/><path d="M4 5h12M4 9h10M4 13h5" stroke="#4a4210" stroke-width="1.600"/><path d="M13 19v-6h6z" fill="#a8901a"/></symbol>
  <symbol id="img" viewBox="0 0 20 20"><path d="M1 1h16v17H1z" fill="#5f9fd8"/><circle cx="6" cy="6" r="2.300" fill="#f0e04a"/><path d="M1 16l5-6 4 4 3-6 4 8v2H1z" fill="#3c8a76"/><path d="M15 12v8M11 16h8" stroke="#fff" stroke-width="2.200"/></symbol>
  <symbol id="pot" viewBox="0 0 20 20"><path d="M3 2q7-3 14 0l2 6H1zM3 8h14v9q-7 2-14 0z" fill="#c98428"/><path d="M3 9h14" stroke="#6e4310" stroke-width="1.600"/><path d="M8 10h4v3H8z" fill="#f0c878"/></symbol>
  <symbol id="eye" viewBox="0 0 20 20"><path d="M1 1h18v18H1z" fill="#ededed"/><path d="M2 11q8-9 16 0-8 8-16 0z" fill="#fff" stroke="#111" stroke-width="1.500"/><circle cx="10" cy="11" r="3.500" fill="#111"/></symbol>
  <symbol id="updn" viewBox="0 0 10 16"><path d="M5 0l4 7H1zM5 16l4-7H1z" fill="#8c8c8c"/></symbol>
</svg>

<header class="menubar">
  <span class="strip"><i class="tri up"></i></span>
  <nav class="menu" aria-label="Main menu">
    <button>File</button><button>Edit</button><button>Render</button><button>Assets</button><button>Windows</button><button>Labs</button><button>Help</button>
  </nav>
  <div class="desk-sel first"><svg class="i14"><use href="#layout"/></svg><select aria-label="Desktop"><option>custum1</option></select><span class="spin"><svg><use href="#updn"/></svg></span></div>
  <div class="desk-sel"><svg class="i14"><use href="#cross"/></svg><select aria-label="Radial menu"><option>Main</option></select><span class="spin"><svg><use href="#updn"/></svg></span></div>
  <div class="desk-sel take"><svg class="i16"><use href="#clap"/></svg><select aria-label="Take"><option>Main</option></select><span class="spin"><svg><use href="#updn"/></svg></span></div>
  <button class="ib" aria-label="Help"><svg class="i14"><use href="#help"/></svg></button>
</header>

<div class="shelves">
  <section class="shelf shelf-a">
    <span class="strip"><i class="tri up"></i></span>
    <div class="shelf-body">
      <div class="stabs"><button class="on">Create</button><button>Modify</button><button>Model</button><button>Polygon</button><button>Deform</button><button>Texture</button><button>Rigging</button><button>Characters</button><button>Constraints</button><button>Hair Utils</button><button>Guide Process</button><button>Terrain FX</button><button>Simple FX</button><button>Volume</button><button>Houdini Engine</button><button>SideFX Labs</button><button class="plus" aria-label="Add shelf"></button><i class="tri dn lite end"></i></div>
      <div class="tools">
        <button><svg><use href="#box"/></svg>Box</button>
        <button><svg><use href="#sphere"/></svg>Sphere</button>
        <button><svg><use href="#tube"/></svg>Tube</button>
        <button><svg><use href="#torus"/></svg>Torus</button>
        <button><svg><use href="#grid"/></svg>Grid</button>
        <button><svg><use href="#null"/></svg>Null</button>
        <button><svg><use href="#line"/></svg>Line</button>
        <button><svg><use href="#circ"/></svg>Circle</button>
        <button><svg><use href="#bezier"/></svg>Curve Bezier</button>
        <button><svg><use href="#draw"/></svg>Draw Curve</button>
        <button><svg><use href="#pathi"/></svg>Path</button>
        <button><svg><use href="#spray"/></svg>Spray Paint</button>
        <button><svg><use href="#fonti"/></svg>Font</button>
        <button class="two"><svg><use href="#plat"/></svg>Platonic<br>Solids</button>
        <button><svg><use href="#lsys"/></svg>L-System</button>
        <button><svg><use href="#meta"/></svg>Metaball</button>
        <button><svg><use href="#file"/></svg>File</button>
        <button><svg><use href="#spiral"/></svg>Spiral</button>
        <button><svg><use href="#helix"/></svg>Helix</button>
        <button><svg><use href="#quick"/></svg>Quick Shapes</button>
      </div>
    </div>
  </section>
  <span class="grip"></span>
  <section class="shelf shelf-b">
    <div class="shelf-body">
      <div class="stabs"><button class="on">Lights and Cameras</button><button>Collisions</button><button>Particles</button><button>Grains</button><button>Vellum</button><button>Rigid Bodies</button><button>Particle Fluids</button><button>Viscous Fluids</button><button>Oceans</button><button>Pyro FX</button><button>FEM</button><button>Wires</button><button>Crowds</button><button>Drive Simulation</button><button class="plus" aria-label="Add shelf"></button><i class="tri dn lite end"></i></div>
      <div class="tools lights">
        <button><svg><use href="#cam"/></svg>Camera</button>
        <button><svg><use href="#ptl"/></svg>Point Light</button>
        <button><svg><use href="#spot"/></svg>Spot Light</button>
        <button><svg><use href="#area"/></svg>Area Light</button>
        <button class="two"><svg><use href="#geol"/></svg>Geometry<br>Light</button>
        <button><svg><use href="#voll"/></svg>Volume Light</button>
        <button><svg><use href="#dist"/></svg>Distant Light</button>
        <button class="two"><svg><use href="#env"/></svg>Environment<br>Light</button>
        <button><svg><use href="#sky"/></svg>Sky Light</button>
        <button><svg><use href="#gi"/></svg>GI Light</button>
        <button><svg><use href="#caus"/></svg>Caustic Light</button>
        <button><svg><use href="#port"/></svg>Portal Light</button>
        <button><svg><use href="#amb"/></svg>Ambient Light</button>
        <button class="two"><svg><use href="#ster"/></svg>Stereo<br>Camera</button>
        <button><svg><use href="#vr"/></svg>VR Camera</button>
        <button><svg><use href="#swi"/></svg>Switcher</button>
        <button class="two cut"><svg><use href="#game"/></svg>Gan<br>Ca</button>
        <i class="tri rt end"></i>
      </div>
    </div>
  </section>
</div>

<main class="desk">
  <span class="vgrip"></span>
  <div class="left">
    <div class="tabs"><button class="on">Scene View<i class="x"></i></button><button>Animation Editor<i class="x"></i></button><button>Render View<i class="x"></i></button><button>Composite View<i class="x"></i></button><button>Motion FX View<i class="x"></i></button><button>Geometry Spreadsheet<i class="x"></i></button><button class="plus" aria-label="New tab"></button><span class="wctl"><i class="sq"></i><i class="tri dn lite"></i></span></div>
    <div class="pathbar">
      <button class="ib fly" aria-label="Back"><svg class="i16"><use href="#back"/></svg></button><button class="ib" aria-label="Forward"><svg class="i14"><use href="#fwd"/></svg></button>
      <div class="path"><svg class="i18"><use href="#clap"/></svg><a href="#obj">obj</a><i class="chev"></i><svg class="i18"><use href="#shapes"/></svg><a href="#circle">circle</a><button class="dd" aria-label="History"><i class="tri dn"></i></button></div>
      <button class="ib" aria-label="Pin"><svg class="i16"><use href="#pin"/></svg></button><button class="ib" aria-label="Link"><svg class="i18"><use href="#target"/></svg></button>
      <span class="gap10"></span>
      <button class="ib drop" aria-label="Shading"><svg class="i16"><use href="#bcube"/></svg></button><button class="ib drop" aria-label="Ghosting"><svg class="i18"><use href="#ghost"/></svg></button><button class="ib drop" aria-label="Background"><svg class="i18"><use href="#white"/></svg></button>
    </div>
    <div class="optool">
      <span class="strip"><i class="tri up"></i></span>
      <div class="ogroup"><button class="ib drop" aria-label="Layout grid"><svg class="i18"><use href="#dots"/></svg></button></div>
      <div class="ogroup mid">
        <button class="ib w32 drop" aria-label="Tumble"><svg class="i18"><use href="#orb"/></svg></button><button class="ib w32 drop" aria-label="Track"><svg class="i18"><use href="#pan"/></svg></button><button class="ib w32 drop" aria-label="Dolly"><svg class="i18"><use href="#dolly"/></svg></button>
        <i class="vs"></i><button class="ib sel" aria-label="Home"><svg class="i18"><use href="#cubes"/></svg></button><i class="vs near"></i>
        <button class="ib" aria-label="Zoom region"><svg class="i16"><use href="#zoomr"/></svg></button><i class="vs sp"></i><button class="ib" aria-label="Stop"><svg class="i18"><use href="#stopr"/></svg></button><i class="vs sp"></i>
        <button class="ib" aria-label="Snapshot"><svg class="i18"><use href="#bug"/></svg></button><button class="ib" aria-label="Options"><svg class="i16"><use href="#gearw"/></svg></button>
      </div>
      <div class="ogroup rt"><button class="ib drop" aria-label="Users"><svg class="i16"><use href="#people"/></svg></button><button class="ib" aria-label="Help"><svg class="i16"><use href="#help"/></svg></button></div>
    </div>
    <div class="stage">
      <div class="side side-l">
        <span class="hstrip"><i class="tri lf"></i></span>
        <div class="selgrp">
          <button class="fly" aria-label="Objects"><svg class="i18"><use href="#selobj"/></svg></button>
          <button class="fly sel" aria-label="Components"><svg class="i18"><use href="#selpt"/></svg></button>
          <button class="fly" aria-label="Dynamics"><svg class="i18"><use href="#seldy"/></svg></button>
        </div>
        <hr class="push">
        <button class="tb fly" aria-label="Select"><svg class="i18"><use href="#arrow"/></svg></button>
        <button class="tb sel" aria-label="Secure selection"><svg class="i18"><use href="#lockw"/></svg></button>
        <button class="tb" aria-label="Move"><svg class="i20"><use href="#mv"/></svg></button>
        <button class="tb" aria-label="Rotate"><svg class="i20"><use href="#rot"/></svg></button>
        <button class="tb" aria-label="Scale"><svg class="i20"><use href="#scl"/></svg></button>
        <button class="tb" aria-label="Pose"><svg class="i18"><use href="#pose"/></svg></button>
        <button class="tb fly" aria-label="Handles"><svg class="i20"><use href="#hnd"/></svg></button>
        <hr>
        <button class="tb fly" aria-label="Snap grid"><svg class="i20"><use href="#mgrid"/></svg></button>
        <button class="tb fly" aria-label="Snap curve"><svg class="i20"><use href="#mcurve"/></svg></button>
        <button class="tb fly" aria-label="Snap point"><svg class="i18"><use href="#mpt"/></svg></button>
        <button class="tb fly" aria-label="Snap multi"><svg class="i18"><use href="#magnet"/></svg></button>
        <hr>
        <button class="tb sel short" aria-label="View tool"><svg class="i20"><use href="#cam"/></svg></button>
        <span class="more"><i class="tri dn"></i></span>
        <button class="tb fly" aria-label="Flipbook"><svg class="i16"><use href="#clip"/></svg></button>
        <button class="tb fly" aria-label="Render"><svg class="i18"><use href="#reel"/></svg></button>
      </div>
      <div class="view">
        <svg class="scene" viewBox="0 0 1233 535" preserveAspectRatio="xMidYMid slice" aria-label="Scene">
          <g fill="none" stroke="#20272e" stroke-width="1.300">
            <path d="M768 112L-35 535M768 112L-523 535M768 112L-1011 535M768 112L-1499 535M768 112L-2475 535M768 112L-2963 535M768 112L-3451 535M768 112L-3939 535M768 112L-5403 535M768 112L941 535M768 112L1429 535M768 112L1917 535M768 112L2405 535M768 112L3381 535M768 112L3869 535M768 112L4357 535M768 112L4845 535"/>
            <path d="M0 416L1233 443M0 355L1233 377M0 315L1233 333M0 286L1233 302M0 247L1233 260M0 234L1233 245M0 223L1233 233M0 213L1233 223M0 199L1233 207M0 193L1233 201M0 188L1233 195M0 184L1233 190M0 176L1233 182M0 173L1233 179M0 170L1233 175M0 167L1233 173M0 163L1233 167M0 159L1233 163"/>
          </g>
          <g fill="none" stroke="#202931" stroke-width="2">
            <path d="M768 112L453 535M768 112L-1987 535M768 112L-4427 535M768 112L2893 535M768 112L5333 535M0 517L1233 553M0 264L1233 278M0 206L1233 214M0 180L1233 186M0 155L1233 160"/>
          </g>
          <path d="M0 100h1233v150H0z" fill="url(#fade)"/>
          <ellipse cx="722" cy="213" rx="20" ry="1" fill="none" stroke="#1e1c28"/>
          <path d="M596 267l9-4v7z" fill="#6a3a3a"/>
          <circle cx="649" cy="271" r="46" fill="#8c8c8c"/>
          <path d="M649 273l-26 35" stroke="#7b8087" stroke-width="2"/>
          <path d="M604 294h90" stroke="#83868b"/>
          <ellipse cx="692" cy="276" rx="34" ry="2" fill="none" stroke="#57536f" stroke-width="1.500"/>
          <circle cx="649" cy="271" r="46" fill="none" stroke="#5ff0f4" stroke-width="3" pathLength="24" stroke-dasharray=".25 .75" stroke-dashoffset=".125"/>
          <path d="M15 515v-14" stroke="#4aa14a"/><path d="M15 516h13" stroke="#b04a4a"/>
        </svg>
        <div class="viewname"><svg class="i20"><use href="#cam"/></svg>View</div>
        <div class="pills"><button>Persp<i class="tri dn"></i></button><button>No cam<i class="tri dn"></i></button></div>
        <div class="axes"><span class="ay">y</span><span class="az">z</span><span class="ax">x</span></div>
        <span class="indie">Indie Edition</span>
      </div>
      <div class="side side-r">
        <span class="hstrip"><i class="tri rt"></i></span>
        <button class="tb sel fly first" aria-label="Reference plane"><svg class="i18"><use href="#plane"/></svg></button>
        <button class="tb fly" aria-label="Construction plane"><svg class="i14"><use href="#cplane"/></svg></button>
        <button class="tb" aria-label="Lock"><svg class="i14"><use href="#lock"/></svg></button>
        <button class="tb" aria-label="No lighting"><svg class="i14"><use href="#bulbx"/></svg></button>
        <button class="tb fly" aria-label="Headlight"><svg class="i16"><use href="#bulb2"/></svg></button>
        <button class="tb fly" aria-label="Normal light"><svg class="i16"><use href="#bulby"/></svg></button>
        <button class="tb sel fly" aria-label="Shadows"><svg class="i16"><use href="#bulbs"/></svg></button>
        <button class="tb sel fly" aria-label="Materials"><svg class="i14"><use href="#check"/></svg></button>
        <button class="tb drop" aria-label="Visibility"><svg class="i16"><use href="#glass"/></svg></button>
        <button class="tb fly" aria-label="Onion"><svg class="i16"><use href="#glass2"/></svg></button>
        <hr>
        <button class="tb sel" aria-label="Points"><svg class="i18"><use href="#pt"/></svg></button>
        <button class="tb" aria-label="Normals"><svg class="i14"><use href="#ptn"/></svg></button>
        <button class="tb" aria-label="Vectors"><svg class="i14"><use href="#ptv"/></svg></button>
        <button class="tb num" aria-label="Point numbers">12</button>
        <button class="tb" aria-label="Prim normals"><svg class="i14"><use href="#prim"/></svg></button>
        <button class="tb num p" aria-label="Prim numbers">12</button>
        <button class="tb" aria-label="Hulls"><svg class="i16"><use href="#hull"/></svg></button>
        <button class="tb sel" aria-label="Backfaces"><svg class="i16"><use href="#face"/></svg></button>
        <button class="tb sel fly" aria-label="Texture"><svg class="i16"><use href="#chk2"/></svg></button>
        <span class="more"><i class="tri dn"></i></span>
      </div>
    </div>
    <div class="hsplit"><i class="tri up"></i><span class="hd"></span><i class="tri dn"></i></div>
    <div class="tabs"><button class="on">Geometry Spreadsheet<i class="x"></i></button><button class="plus" aria-label="New tab"></button><span class="wctl"><i class="sq"></i><i class="tri dn lite"></i></span></div>
    <div class="pathbar">
      <button class="ib fly" aria-label="Back"><svg class="i16"><use href="#back"/></svg></button><button class="ib" aria-label="Forward"><svg class="i14"><use href="#fwd"/></svg></button>
      <div class="path"><svg class="i18"><use href="#clap"/></svg><a href="#obj">obj</a><i class="chev"></i><svg class="i18"><use href="#shapes"/></svg><a href="#circle">circle</a><button class="dd" aria-label="History"><i class="tri dn"></i></button></div>
      <button class="ib" aria-label="Pin"><svg class="i16"><use href="#pin"/></svg></button><button class="ib" aria-label="Link"><svg class="i18"><use href="#target"/></svg></button>
    </div>
    <div class="sheetbar">
      <span class="node"><b>Node:</b>circle2</span>
      <span class="seg"><button class="sel" aria-label="Points"><svg class="i16"><use href="#spts"/></svg></button><button aria-label="Vertices"><svg class="i16"><use href="#svtx"/></svg></button><button aria-label="Primitives"><svg class="i14"><use href="#selpt"/></svg></button><button aria-label="Detail"><svg class="i14"><use href="#shapes"/></svg></button></span>
      <label for="grp">Group:</label><input id="grp" class="fld">
      <button class="fb" aria-label="Filter groups"><svg class="i14"><use href="#funnel"/></svg></button>
      <span class="combo"><select aria-label="View"><option>View</option></select><i class="tri dn"></i></span>
      <span class="combo off"><select aria-label="Intrinsics" disabled><option>Intrinsics</option></select><i class="tri dn"></i></span>
      <label for="att">Attributes:</label><input id="att" class="fld">
      <button class="fb" aria-label="Filter attributes"><svg class="i14"><use href="#funnel"/></svg></button>
      <button class="fb plain" aria-label="Options"><svg class="i12"><use href="#menuo"/></svg></button>
      <button class="ib end" aria-label="Help"><svg class="i16"><use href="#help"/></svg></button>
    </div>
    <div class="sheet">
      <div class="sheetwrap">
        <table>
          <colgroup><col class="ci"><col class="cv"><col class="cv"><col class="cv"><col></colgroup>
          <thead><tr><th></th><th>P[x]</th><th>P[y]</th><th>P[z]</th><th></th></tr></thead>
          <tbody>
            <tr><th>0</th><td>0.05</td><td>0.0</td><td>0.0</td><td></td></tr>
            <tr><th>1</th><td>0.0482963</td><td>-0.012941</td><td>0.0</td><td></td></tr>
            <tr><th>2</th><td>0.0433013</td><td>-0.025</td><td>0.0</td><td></td></tr>
            <tr><th>3</th><td>0.0353553</td><td>-0.0353553</td><td>0.0</td><td></td></tr>
          </tbody>
        </table>
        <span class="wm">Indie</span>
      </div>
      <div class="vscroll"><span class="thumb"><i></i></span><span class="track"></span><span class="sb dim"><i class="tri up"></i></span><span class="sb"><i class="tri dn"></i></span></div>
    </div>
    <div class="hscroll"><span class="dotgrip"></span></div>
  </div>
  <span class="vgrip b"></span>
  <div class="right">
    <section class="parms">
      <div class="tabs"><button class="on it">circle2<i class="x"></i></button><button>Take List<i class="x"></i></button><button>Performance Monitor<i class="x"></i></button><button class="plus" aria-label="New tab"></button><span class="wctl"><i class="sq"></i><i class="tri dn lite"></i></span></div>
      <div class="pathbar">
        <button class="ib fly" aria-label="Back"><svg class="i16"><use href="#back"/></svg></button><button class="ib" aria-label="Forward"><svg class="i14"><use href="#fwd"/></svg></button>
        <div class="path"><svg class="i18"><use href="#clap"/></svg><a href="#obj">obj</a><i class="chev"></i><svg class="i18"><use href="#shapes"/></svg><a href="#circle">circle</a><button class="dd" aria-label="History"><i class="tri dn"></i></button></div>
        <button class="ib" aria-label="Pin"><svg class="i16"><use href="#pin"/></svg></button><button class="ib" aria-label="Link"><svg class="i18"><use href="#target"/></svg></button>
      </div>
      <div class="phead">
        <button class="ib drop" aria-label="Node type"><svg class="i16"><use href="#circ"/></svg></button><label for="nm">Circle</label><input id="nm" value="circle2">
        <span class="acts"><button class="ib drop" aria-label="Gear"><svg class="i16"><use href="#gear"/></svg></button><button class="ib drop" aria-label="Brush"><svg class="i16"><use href="#brush"/></svg></button><button class="ib" aria-label="Search"><svg class="i16"><use href="#mag"/></svg></button><button class="ib" aria-label="Info"><svg class="i16"><use href="#info"/></svg></button><button class="ib" aria-label="Help"><svg class="i16"><use href="#help"/></svg></button></span>
      </div>
      <div class="pgrid">
        <label for="p1">Primitive Type</label><div><span class="menu-sel m1"><select id="p1"><option>Polygon</option></select><span class="spin"><svg><use href="#updn"/></svg></span></span></div>
        <label class="hot" for="p2">Orientation</label><div><span class="menu-sel m2"><select id="p2"><option>XY Plane</option></select><span class="spin"><svg><use href="#updn"/></svg></span></span><label class="ck"><input type="checkbox" checked>Reverse</label></div>
        <label for="p3">Radius</label><div><input id="p3" class="v" value="1"><input class="v" aria-label="Radius y" value="1"></div>
        <label for="p4">Center</label><div><input id="p4" class="v" value="0"><input class="v" aria-label="Center y" value="0"><input class="v" aria-label="Center z" value="0"></div>
        <label for="p5">Rotate</label><div><input id="p5" class="v" value="0"><input class="v" aria-label="Rotate y" value="0"><input class="v" aria-label="Rotate z" value="0"></div>
        <label for="p6">Uniform Scale</label><div><input id="p6" class="v n" value="0.05"><input type="range" class="sl" aria-label="Uniform Scale slider" min="0" max="1000" value="0"></div>
        <label class="off" for="p7">Order</label><div class="off"><input id="p7" class="v n" value="4" disabled><input type="range" class="sl t9" aria-label="Order slider" min="0" max="1000" value="216" disabled></div>
        <label for="p8">Divisions</label><div><input id="p8" class="v n" value="24"><input type="range" class="sl t24" aria-label="Divisions slider" min="0" max="1000" value="465" style="--fill:46.5%"></div>
        <label for="p9">Arc Type</label><div><span class="menu-sel m3"><select id="p9"><option>Closed</option></select><span class="spin"><svg><use href="#updn"/></svg></span></span></div>
        <label for="p10">Arc Angles</label><div><input id="p10" class="v" value="0"><input class="v" aria-label="End angle" value="360"></div>
        <span></span><div><label class="ck off nomar"><input type="checkbox" checked disabled>Imperfect</label></div>
      </div>
    </section>
    <div class="hsplit"><i class="tri up"></i><span class="hd"></span><i class="tri dn"></i></div>
    <section class="net">
      <div class="tabs"><button class="on it">/obj/circle<i class="x"></i></button><button>Tree View<i class="x"></i></button><button>Material Palette<i class="x"></i></button><button>Asset Browser<i class="x"></i></button><button class="plus" aria-label="New tab"></button><span class="wctl"><i class="sq"></i><i class="tri dn lite"></i></span></div>
      <div class="pathbar">
        <button class="ib fly" aria-label="Back"><svg class="i16"><use href="#back"/></svg></button><button class="ib" aria-label="Forward"><svg class="i14"><use href="#fwd"/></svg></button>
        <div class="path"><svg class="i18"><use href="#clap"/></svg><a href="#obj">obj</a><i class="chev"></i><svg class="i18"><use href="#shapes"/></svg><a href="#circle">circle</a><button class="dd" aria-label="History"><i class="tri dn"></i></button></div>
        <button class="ib" aria-label="Pin"><svg class="i16"><use href="#pin"/></svg></button><button class="ib" aria-label="Link"><svg class="i18"><use href="#target"/></svg></button>
      </div>
      <div class="netmenu">
        <span class="strip"><i class="tri up"></i></span>
        <nav class="menu" aria-label="Network menu"><button>Add</button><button>Edit</button><button>Go</button><button>View</button><button>Tools</button><button>Layout</button><button>Labs</button><button>Help</button></nav>
        <span class="nticons"><button class="ib" aria-label="Tools"><svg class="i16"><use href="#tools"/></svg></button><button class="ib" aria-label="Tree"><svg class="i14"><use href="#tree"/></svg></button><button class="ib" aria-label="List"><svg class="i14"><use href="#rows"/></svg></button></span>
        <span class="nticons"><button class="ib" aria-label="Palette"><svg class="i14"><use href="#pal"/></svg></button><button class="ib" aria-label="Table"><svg class="i14"><use href="#tbl"/></svg></button></span>
        <span class="nticons"><button class="ib" aria-label="Network box"><svg class="i14"><use href="#nbox"/></svg></button><button class="ib" aria-label="Sticky note"><svg class="i16"><use href="#note"/></svg></button><button class="ib" aria-label="Image"><svg class="i16"><use href="#img"/></svg></button><button class="ib" aria-label="Dependency"><svg class="i16"><use href="#pot"/></svg></button></span>
        <span class="nticons"><button class="ib" aria-label="Find"><svg class="i16"><use href="#mag"/></svg></button><button class="ib" aria-label="Display"><svg class="i14"><use href="#eye"/></svg></button></span>
      </div>
      <div class="canvas">
        <span class="edition">Indie Edition</span><span class="ctx">Geometry</span>
        <div class="gnode n1"><i class="ring"></i>
          <svg class="nb" viewBox="0 0 80 28"><rect x="1" y="1" width="78" height="26" rx="5" fill="#111" stroke="#ffd500" stroke-width="2"/><rect x="3" y="3" width="74" height="22" rx="2" fill="#cfcfcf"/><path d="M70 3h7v22h-9z" fill="#00aeef"/><path d="M13 3l-3 22M24 3l-3 22M59 3l-3 22M70 3l-2 22" stroke="#777"/><circle cx="40" cy="14" r="9" fill="none" stroke="#6d7480" stroke-width="2"/></svg>
          <i class="out"></i><span class="nl">circle2</span></div>
        <div class="gnode n2">
          <svg class="nb" viewBox="0 0 80 28"><rect x="2" y="2" width="76" height="24" rx="4" fill="#cfcfcf" stroke="#8d8d8d"/><path d="M14 2l-3 24M25 2l-3 24M59 2l-3 24M70 2l-3 24" stroke="#777"/><path d="M34 5v17h14" stroke="#bbb" stroke-width="3" fill="none"/><path d="M43 5l4 16" stroke="#b77" stroke-dasharray="1 1"/><path d="M33 20L45 6" stroke="#333" stroke-width="1.500"/><path d="M32 21L44 7" stroke="#b55" stroke-dasharray="2 2"/></svg>
          <i class="out"></i><span class="nl">line5</span></div>
        <i class="mark"></i>
      </div>
    </section>
  </div>
</main>

<section class="play">
  <span class="strip tall"><i class="tri dn"></i></span>
  <div class="pcols">
    <div class="prow">
      <span class="btns"><button aria-label="First frame"><svg class="i18"><use href="#first"/></svg></button><button aria-label="Play reverse"><svg class="i18"><use href="#prev"/></svg></button><button class="sel" aria-label="Stop"><svg class="i18"><use href="#stop"/></svg></button><button aria-label="Play"><svg class="i18"><use href="#play"/></svg></button><button aria-label="Last frame"><svg class="i18"><use href="#last"/></svg></button></span>
      <input class="fr" aria-label="Current frame" value="1">
      <span class="btns nar"><button aria-label="Step back"><svg class="i12"><use href="#stepb"/></svg></button><button aria-label="Step forward"><svg class="i12"><use href="#stepf"/></svg></button></span>
      <div class="timeline"><span class="cur">1</span><i class="f"></i><i>24</i><i>48</i><i>72</i><i>96</i><i>120</i><i>144</i><i>168</i><i>192</i><i>216</i><i>240</i><i>264</i><i class="l">288</i></div>
    </div>
    <div class="prow">
      <span class="btns low"><button aria-label="Preferences"><svg class="i18"><use href="#pref"/></svg></button><button aria-label="Audio"><svg class="i18"><use href="#spk"/></svg></button><button class="drop" aria-label="Loop"><svg class="i18"><use href="#undo"/></svg></button><button aria-label="Real time"><svg class="i18"><use href="#clock"/></svg></button><button class="fly" aria-label="Snap"><svg class="i18"><use href="#ticks"/></svg></button><button aria-label="Scope"><svg class="i18"><use href="#keyd"/></svg></button></span>
      <span class="btns dimb"><button aria-label="Previous key"><svg class="i14"><use href="#kf"/></svg></button><button aria-label="Next key"><svg class="i14"><use href="#kl"/></svg></button></span>
      <input class="fr2 g" aria-label="Global start" value="1"><input class="fr2" aria-label="Start" value="1">
      <span class="range"><i class="tri rt"></i><i class="bar"></i><i class="tri lf"></i></span>
      <input class="fr2" aria-label="End" value="300"><input class="fr2 g" aria-label="Global end" value="300">
    </div>
  </div>
  <div class="keyb"><button class="kcirc" aria-label="Set key"><svg class="i18"><use href="#key"/></svg></button><button class="kdd" aria-label="Key options"><i class="tri dn"></i></button></div>
  <div class="chans">
    <button class="cb fly" aria-label="Channel list"><svg class="i16"><use href="#chan"/></svg></button><button class="cbtn">0 keys, 0/0 channels<i class="tri up"></i></button>
    <button class="cb" aria-label="Animation editor"><svg class="i16"><use href="#scope"/></svg></button><span class="menu-sel"><select aria-label="Key scope"><option>Key All Channels</option></select><span class="spin"><svg><use href="#updn"/></svg></span></span>
  </div>
</section>
<footer class="status">
  <span>Successfully saved qiita_mesh.hiplc (Tue Nov 25 01:52:25 2025)</span>
  <div class="upd"><button class="ib fly" aria-label="Cook"><svg class="i18"><use href="#brain"/></svg></button><button class="ib" aria-label="Refresh"><svg class="i16"><use href="#refresh"/></svg></button><span class="menu-sel"><select aria-label="Update mode"><option>Auto Update</option></select><span class="spin"><svg><use href="#updn"/></svg></span></span></div>
</footer>
</body>
</html>
```
FILE: styles.css
```css
:root {
  --bg: #3a3a3a;
  --dark: #2e2e2e;
  --line: #000;
  --txt: #c0c0c0;
  --sel: #657f9c;
  --ui: "Noto Sans CJK JP", "Noto Sans", sans-serif;
  --mono: "Liberation Mono", monospace;
}
* { box-sizing: border-box; }
html, body { height: 100%; }
body {
  margin: 0;
  display: flex;
  flex-direction: column;
  background: #2b2b2b;
  color: var(--txt);
  font: 11px/16px var(--ui);
  overflow: hidden;
}
button, select, input { font: inherit; color: inherit; margin: 0; border: 0; padding: 0; background: none; border-radius: 0; outline: 0; min-width: 0; }
button { display: flex; align-items: center; justify-content: center; position: relative; white-space: nowrap; }
select { appearance: none; }
select:disabled { opacity: 1; }
a { color: inherit; text-decoration: none; }
i { font-style: normal; }
svg { display: block; flex: none; }
.defs { position: absolute; width: 0; height: 0; }
.i12 { width: 12px; height: 12px; }
.i14 { width: 14px; height: 14px; }
.i16 { width: 16px; height: 16px; }
.i18 { width: 18px; height: 18px; }
.i20 { width: 20px; height: 20px; }
.end { margin-left: auto; }

.tri { display: block; flex: none; width: 0; height: 0; border: 4px solid transparent; color: #8a8a8a; }
.tri.dn { border-top: 6px solid; border-bottom: 0; }
.tri.up { border-bottom: 6px solid; border-top: 0; }
.tri.rt { border-left: 6px solid; border-right: 0; }
.tri.lf { border-right: 6px solid; border-left: 0; }
.tri.lite { color: #e0e0e0; border-left-width: 3px; border-right-width: 3px; }

.fly::after, .drop::after { content: ""; position: absolute; right: 0; bottom: 1px; border: 3px solid transparent; }
.fly::after { border-left: 4px solid #8e8e8e; border-right: 0; }
.drop::after { border-top: 4px solid #8e8e8e; border-bottom: 0; border-left-width: 4px; border-right-width: 4px; }
.sel.fly::after { border-left-color: #1c2530; }
.sel { background: linear-gradient(#56708c, #7890aa); box-shadow: inset 1px 1px 0 #33475e; }
.ib { width: 24px; height: 22px; flex: none; }

.strip { width: 7px; flex: none; align-self: stretch; background: linear-gradient(90deg, #555, #333); border-right: 1px solid #000; display: flex; justify-content: center; padding-top: 2px; margin-left: 2px; }
.strip .tri { color: #000; border-left-width: 3px; border-right-width: 3px; }
.spin { width: 24px; flex: none; align-self: stretch; display: flex; align-items: center; justify-content: center; background: linear-gradient(#3a3a3a, #252525); }
.spin svg { width: 8px; height: 13px; }

.menubar { display: flex; align-items: center; height: 26px; border-bottom: 1px solid #000; border-top: 1px solid #4a4a4a; background: linear-gradient(#3d3d3d, #343434); padding-right: 5px; flex: none; }
.menu { display: flex; gap: 9px; padding-left: 6px; font-size: 12px; }
.desk-sel { display: flex; align-items: center; align-self: stretch; width: 128px; margin: 1px 4px 1px 0; padding-left: 6px; gap: 5px; background: linear-gradient(#4c4c4c, #5a5a5a); font-size: 12px; }
.desk-sel.first { margin-left: 25px; }
.desk-sel select { flex: 1; }
.desk-sel.take { margin-left: auto; width: 171px; }

.shelves { display: grid; grid-template-columns: 51fr 9px 50fr; height: 58px; flex: none; border-bottom: 1px solid #000; }
.shelf { display: flex; min-width: 0; }
.shelf-body { flex: 1; min-width: 0; display: flex; flex-direction: column; background: linear-gradient(#4c4c4c, #383838 100%); }
.stabs { display: flex; align-items: stretch; height: 18px; flex: none; background: var(--dark); font-size: 9px; line-height: 14px; }
.stabs button { padding: 0 6px; border: 1px solid #000; border-width: 0 1px 1px 0; box-shadow: inset 0 2px 0 -1px #666; }
.stabs .on { background: #484848; border-bottom: 0; }
.stabs .plus, .tabs .plus { border: 0; width: 26px; box-shadow: none; padding: 0; background: none; }
.plus::before, .plus::after { content: ""; position: absolute; background: #e4e4e0; width: 9px; height: 3px; }
.plus::after { width: 3px; height: 9px; }
.stabs .end { align-self: center; margin-right: 6px; }
.tools { display: flex; flex: 1; padding-left: 1px; font-size: 9px; line-height: 13px; align-items: flex-start; }
.tools.lights { padding-left: 18px; }
.tools button { flex: none; flex-direction: column; min-width: 41px; padding: 2px 4px 0; gap: 1px; }
.tools svg { width: 20px; height: 20px; }
.tools .two { width: 64px; line-height: 10px; gap: 0; padding-top: 1px; }
.tools .two svg { height: 17px; }
.tools .cut { width: 32px; min-width: 0; }
.tools .end { align-self: center; margin-right: 3px; }
.grip { border: 1px solid #000; border-width: 0 1px; background: linear-gradient(90deg, #4a4a4a, #3a3a3a); position: relative; }
.grip::after { content: ""; position: absolute; left: 50%; top: 50%; width: 5px; height: 15px; margin: -8px 0 0 -3px; background: repeating-linear-gradient(#0000 0 1px, #3f3f3f 1px 3px), repeating-linear-gradient(90deg, #000 0 1px, #444 1px 2px); }

.desk { flex: 1; min-height: 0; display: grid; grid-template-columns: 5px 36fr 7px 17fr; }
.vgrip { background: #484848; border-left: 1px solid #000; border-right: 1px solid #333; position: relative; }
.vgrip::after { content: ""; position: absolute; left: 1px; right: 0; top: 49%; height: 20px; background: repeating-linear-gradient(#0000 0 1px, #484848 1px 3px), #999; opacity: .6; }
.vgrip.b { border-left-width: 2px; }
.left, .parms, .net { display: flex; flex-direction: column; min-width: 0; min-height: 0; background: var(--bg); }
.right { display: grid; grid-template-rows: minmax(0, 1fr) 7px minmax(0, 1fr); min-width: 0; }

.tabs { display: flex; height: 19px; flex: none; background: var(--dark); font-size: 10px; }
.tabs button { padding: 0 3px 0 7px; border-right: 2px solid #1d1d1d; gap: 7px; }
.tabs .on { background: linear-gradient(#505050, #4a4a4a); padding-left: 8px; gap: 12px; }
.tabs .it { font-style: italic; }
.x { position: relative; width: 10px; height: 10px; }
.x::before, .x::after { content: ""; position: absolute; left: 2px; top: 4px; width: 6px; height: 2px; background: #c4c4c4; transform: rotate(45deg); }
.x::after { transform: rotate(-45deg); }
.wctl { margin-left: auto; display: flex; align-items: center; gap: 10px; padding-right: 7px; }
.sq { width: 10px; height: 8px; background: #dcdcdc; }

.pathbar { display: flex; align-items: center; height: 34px; flex: none; padding: 0 2px 0 4px; background: linear-gradient(#494949, #393939); border-bottom: 1px solid #000; font-size: 11px; }
.path { flex: 1; min-width: 0; display: flex; align-items: center; height: 24px; margin: 0 5px 0 4px; padding-left: 5px; border: 1px solid #000; background: linear-gradient(#3a3a3a, #434343); box-shadow: inset 0 1px 0 #6a6a6a; }
.path a { margin: 0 5px 0 4px; }
.chev { width: 12px; height: 12px; margin: 0 7px 0 -7px; border: 1px solid #111; border-width: 1px 1px 0 0; transform: rotate(45deg); }
.path .dd { margin-left: auto; align-self: stretch; width: 18px; background: linear-gradient(#383838, #222); }
.path .tri { border-left-width: 3px; border-right-width: 3px; }
.gap10 { width: 10px; }

.optool { display: grid; grid-template-columns: auto 1fr auto 1fr; align-items: center; height: 31px; flex: none; background: var(--dark); border-top: 1px solid #6a6a6a; }
.optool .strip { width: 9px; margin-left: 1px; }
.ogroup { display: flex; align-items: center; padding: 0 2px; }
.ogroup.mid { padding-right: 28px; }
.ogroup.rt { justify-content: flex-end; }
.w32 { width: 33px; }
.w32::after { right: 2px; }
.optool .sel { width: 20px; }
.vs { width: 1px; height: 24px; background: #555; margin: 0 3px; }
.vs.near { margin: 0 1px; }
.vs.sp { margin: 0 4px; }

.stage { flex: 1; min-height: 0; display: flex; }
.side { flex: none; display: flex; flex-direction: column; align-items: center; background: #353535; overflow: hidden; }
.side-l { width: 36px; padding-left: 2px; }
.side-r { width: 27px; }
.side hr { width: 28px; height: 1px; border: 0; background: #555; margin: 4px 0; flex: none; }
.side-r hr { width: 24px; margin: 2px 0; }
.hstrip { align-self: stretch; height: 10px; flex: none; background: linear-gradient(#666, #3c3c3c); border-bottom: 1px solid #000; display: flex; align-items: center; padding: 0 3px; }
.hstrip .tri { color: #000; border-width: 3px; }
.hstrip .tri.lf { border-right-width: 6px; }
.hstrip .tri.rt { margin-left: auto; border-left-width: 6px; }
.selgrp { margin-top: 6px; border: 1px solid #111; background: linear-gradient(#5a5a5a, #444); }
.selgrp button { width: 24px; height: 24px; }
.side-l .push { margin: 6px 0 20px; }
.tb { width: 26px; height: 26px; margin: 1px 0; flex: none; }
.side-r .tb { width: 23px; height: 23px; }
.side-r .first { margin-top: 20px; }
.side-r .more { margin-top: 7px; }
.side-l .tb.short { height: 20px; overflow: hidden; align-items: flex-start; padding-top: 4px; }
.more { height: 14px; display: flex; align-items: center; flex: none; }
.side-l .more ~ .tb { height: 24px; }
.num { font: bold 9px/12px var(--ui); color: #ddd; padding: 0 0 4px 4px; }
.num::before { content: ""; position: absolute; left: 5px; bottom: 3px; width: 5px; height: 5px; border-radius: 50%; background: #ddd; }
.num.p::before { width: 10px; height: 7px; border-radius: 0; clip-path: polygon(0 60%, 100% 0, 100% 100%); }

.view { flex: 1; min-width: 0; position: relative; background: #000; overflow: hidden; }
.scene { position: absolute; inset: 0; width: 100%; height: 100%; }
.viewname { position: absolute; left: 17px; top: 17px; display: flex; align-items: center; gap: 12px; font: bold 14px/20px "Open Sans", "Noto Sans", sans-serif; color: #fff; }
.pills { position: absolute; right: 7px; top: 5px; display: flex; gap: 7px; font-size: 11px; }
.pills button { height: 20px; padding: 0 7px; gap: 3px; border: 1px solid #a0a0a0; border-radius: 10px; background: #101010; color: #ccc; }
.pills .tri { color: #ddd; border-width: 3px; border-top-width: 4px; }
.indie { position: absolute; right: 13px; bottom: 8px; font-size: 11px; line-height: 16px; color: #c8c800; }
.axes { position: absolute; left: 0; bottom: 0; width: 40px; height: 40px; font: 12px/12px "DejaVu Sans", sans-serif; }
.axes span { position: absolute; }
.ay { left: 14px; top: 4px; color: #5c5; }
.az { left: 13px; top: 17px; color: #66f; }
.ax { left: 27px; top: 15px; color: #d55; }

.hsplit { height: 6px; flex: none; display: flex; align-items: center; justify-content: center; gap: 20px; background: #444; border-top: 1px solid #808080; }
.hsplit .tri { border-left-width: 3px; border-right-width: 3px; }
.hsplit .tri.up { border-bottom-width: 4px; }
.hsplit .tri.dn { border-top-width: 4px; }
.hd { width: 20px; height: 5px; background: repeating-linear-gradient(90deg, #0000 0 1px, #444 1px 3px), #aaa; }

.sheetbar { display: flex; align-items: center; height: 28px; flex: none; padding: 0 2px 0 8px; background: var(--dark); border-top: 1px solid #666; margin-top: 1px; font-size: 11px; }
.node { width: 248px; flex: none; }
.seg { display: flex; margin-right: 3px; flex: none; }
.seg button { width: 20px; height: 20px; border-right: 1px solid #000; background: linear-gradient(#555, #3e3e3e); }
.seg .sel { background: var(--sel); }
.fld { width: 176px; height: 20px; background: #121212; border: 1px solid #252525; margin: 0 1px; flex: none; }
.fb { width: 20px; height: 20px; border: 1px solid #000; flex: none; }
.fb.plain { width: 18px; border-color: #1c1c1c; margin-left: 4px; }
.combo { display: flex; align-items: center; width: 106px; height: 20px; padding: 0 7px 0 13px; margin-left: 4px; background: linear-gradient(#505050, #404040); flex: none; }
.combo .tri { border-left-width: 3px; border-right-width: 3px; }
.combo select { flex: 1; }
.combo.off { width: 128px; color: #777; background: #2c2c2c; }
.combo.off .tri { color: #484848; }
.combo.off + label { margin-left: 3px; }

.sheet { display: flex; height: 87px; flex: none; border-top: 1px solid #5a5a5a; border-bottom: 1px solid #666; background: #1e1e1e; padding-left: 2px; }
.sheetwrap { flex: 1; min-width: 0; position: relative; overflow: hidden; border: 1px solid #111; margin-right: 2px; }
table { width: 100%; table-layout: fixed; border-collapse: collapse; font: 12px/14px var(--mono); color: #b8b8b8; }
.ci { width: 86px; }
.cv { width: 85px; }
th, td { text-align: left; font-weight: normal; padding: 0 3px; height: 18px; border-right: 1px solid #1a1a1a; white-space: nowrap; }
thead th { height: 16px; background: linear-gradient(#2a2a2a, #383838); border-bottom: 1px solid #111; font: 11px/14px var(--ui); }
tbody tr { background: #2d2d2d; }
tbody tr:nth-child(even) { background: #3a3a3a; }
tbody th { background: linear-gradient(#2b2b2b, #3a3a3a); border-bottom: 1px solid #050505; }
.wm { position: absolute; right: 5px; bottom: -2px; font-size: 11px; line-height: 16px; }
.vscroll { width: 14px; flex: none; display: flex; flex-direction: column; background: #222; }
.vscroll .thumb { height: 13px; background: #4a4a4a; display: flex; align-items: center; justify-content: center; }
.thumb i { width: 8px; height: 2px; background: repeating-linear-gradient(90deg, #000 0 2px, #0000 2px 3px); }
.track { flex: 1; }
.sb { height: 18px; display: flex; align-items: center; justify-content: center; background: #3e3e3e; border-top: 1px solid #111; }
.sb .tri { border-left-width: 3px; border-right-width: 3px; }
.sb.dim { background: #303030; }
.sb.dim .tri { color: #4a4a4a; }
.hscroll { height: 14px; flex: none; background: #343434; display: flex; align-items: center; justify-content: center; margin-top: 1px; padding-right: 47px; }
.dotgrip { width: 11px; height: 8px; background: repeating-linear-gradient(#0000 0 2px, #343434 2px 3px), repeating-linear-gradient(90deg, #000 0 2px, #343434 2px 3px); }

.phead { display: flex; align-items: center; height: 27px; flex: none; border-bottom: 1px solid #000; margin: 0 2px; }
.phead label { font-weight: bold; font-size: 11px; margin: 0 2px 0 1px; }
.phead input { flex: 1; height: 21px; padding: 0 3px; background: #111; border: 1px solid #262626; font: 12px/18px var(--mono); color: #ddd; align-self: flex-end; }
.acts { display: flex; width: 133px; justify-content: space-between; padding-left: 4px; flex: none; }
.pgrid { display: grid; grid-template-columns: 139px minmax(0, 1fr); grid-auto-rows: 25px; column-gap: 15px; align-items: center; padding: 3px 11px 0 0; font-size: 11px; }
.pgrid > label { justify-self: end; white-space: nowrap; }
.pgrid > .hot { justify-self: stretch; margin-left: 17px; text-align: right; padding-right: 4px; margin-right: -5px; border: 1px solid #000; background: #6a6a6a; line-height: 17px; }
.pgrid > div { display: flex; gap: 2px; align-items: center; min-width: 0; }
.v { flex: 1; height: 23px; padding: 0 3px; background: #121212; border: 2px solid #252525; border-width: 2px 1px 2px 1px; font: 12px/16px var(--mono); color: #ddd; }
.v.n { flex: 0 0 74px; font-weight: bold; color: #fff; }
.off { color: #6c6c6c; }
.off .v { background: #303030; color: #555; font-weight: normal; }
.menu-sel { display: inline-flex; align-items: stretch; height: 22px; background: linear-gradient(#4f4f4f, #3f3f3f); border-bottom: 1px solid #111; box-shadow: 1px 1px 1px #1a1a1a; }
.menu-sel select { flex: 1; padding-left: 14px; }
.m1 { width: 115px; font-weight: bold; }
.m2 { width: 91px; }
.m3 { width: 100px; }
.ck { display: flex; align-items: center; gap: 7px; margin-left: 2px; }
.ck.nomar { margin-left: 0; }
.ck input { appearance: none; width: 14px; height: 14px; background: #111; position: relative; }
.ck input::after { content: ""; position: absolute; left: 4px; top: 0; width: 6px; height: 10px; border: solid #eee; border-width: 0 2px 3px 0; transform: rotate(35deg); }
.ck.off input { background: #333; }
.ck.off input::after { border-color: #999; }
.sl { appearance: none; flex: 1; height: 22px; margin: 0 2px 0 1px; --fill: 0%; background: none; }
.sl::-webkit-slider-runnable-track { height: 5px; border: 1px solid #000; border-top: 2px solid #000; border-radius: 2px; background: linear-gradient(90deg, #0b52a5 var(--fill), #000 0); box-shadow: 0 -1px 0 #333, inset 0 1px 0 #333; }
.sl::-webkit-slider-thumb { appearance: none; width: 6px; height: 21px; margin-top: -10px; background: linear-gradient(90deg, #ddd, #777); border: 1px solid #111; }
.t24 { background: repeating-linear-gradient(90deg, #999 0 1px, #0000 1px 15px) 2px 14px / 100% 2px no-repeat; }
.t9 { background: repeating-linear-gradient(90deg, #888 0 1px, #0000 1px 40px) 2px 14px / 100% 2px no-repeat; opacity: .25; }

.netmenu { display: flex; align-items: center; height: 26px; flex: none; border-bottom: 1px solid #000; background: linear-gradient(#3c3c3c, #353535); padding-right: 1px; }
.netmenu .strip { margin-left: 1px; width: 9px; }
.netmenu .menu { gap: 13px; padding: 0 8px 0 8px; }
.nticons { display: flex; }
.nticons + .nticons { margin-left: auto; }
.canvas { flex: 1; min-height: 0; position: relative; background: #303030; overflow: hidden; }
.edition { position: absolute; left: 249px; top: 12px; font-size: 19px; line-height: 24px; color: #464646; }
.ctx { position: absolute; right: 12px; top: 16px; font-size: 23px; line-height: 26px; font-weight: bold; color: #4d4d4d; }
.gnode { position: absolute; display: flex; align-items: center; width: max-content; gap: 4px; font-size: 16px; line-height: 28px; }
.n1 { left: 115px; top: 137px; }
.n2 { left: 339px; top: 137px; }
.nb { width: 80px; height: 28px; position: relative; }
.ring { position: absolute; left: 3px; top: -24px; width: 74px; height: 74px; border-radius: 50%; background: #9370cf; border: 12px solid #446797; }
.out { position: absolute; left: 37px; top: 27px; width: 7px; height: 7px; border-radius: 50%; background: #b8b8b8; }
.mark { position: absolute; left: 73px; top: 101px; width: 200px; height: 102px; border: 5px solid #f00; border-radius: 6px; box-shadow: 0 0 4px 1px #111, inset 0 0 4px 1px #111; }

.play { display: flex; height: 72px; flex: none; border-top: 1px solid #6a6a6a; border-bottom: 1px solid #000; background: var(--dark); padding-right: 5px; }
.strip.tall { align-items: flex-end; padding-bottom: 3px; margin: 0 7px 0 1px; }
.pcols { flex: 1; min-width: 0; }
.prow { display: flex; align-items: center; height: 44px; }
.prow + .prow { height: 22px; }
.btns { display: flex; flex: none; }
.btns button { width: 27px; height: 27px; border: 1px solid #0c0c0c; border-left: 0; background: linear-gradient(#585858, #3c3c3c); }
.btns .sel { background: #617d9d; }
.btns.low button { height: 24px; }
.btns.nar button { width: 14px; }
.btns.dimb { margin-left: 4px; }
.btns.dimb button { width: 23px; height: 24px; background: #333; border-color: #1d1d1d; }
.fr, .fr2 { height: 26px; width: 46px; margin: 0 2px; padding: 0 4px; background: #121212; border: 1px solid #262626; font: 12px/16px var(--mono); color: #ddd; flex: none; }
.fr2 { height: 23px; width: 43px; margin: 0 0 0 3px; }
.fr2.g { background: #1f1f1f; }
.fr2.g:last-child { margin-right: 3px; }
.btns.dimb + .fr2 { margin-left: 6px; }
.timeline { flex: 1; min-width: 0; margin: 0 3px 0 6px; height: 40px; display: grid; grid-template-columns: 23fr repeat(11, 24fr) 13fr; position: relative; font-size: 9px; line-height: 12px; color: #989898; }
.timeline i { border-left: 1px solid #aaa; border-image: linear-gradient(#0000 15px, #aaa 15px 30px, #0000 30px) 1; position: relative; min-width: 0; padding-top: 1px; background: linear-gradient(#aaa, #aaa) 0 22px / 100% 1px no-repeat, linear-gradient(90deg, #0000 calc(100% - 1px), #777 0) 0 18px / 25% 8px repeat-x; }
.timeline .l { background-size: 100% 1px, 46% 8px; }
.cur { position: absolute; left: 0; top: 1px; width: 24px; height: 19px; border: 2px solid #eee; background: #000; color: #eee; font: 12px/15px var(--mono); text-align: center; z-index: 1; }
.range { flex: 1; display: flex; align-items: center; }
.range .tri { border-width: 5px; color: #bbb; }
.range .tri.rt { border-left-width: 6px; border-right: 0; }
.range .tri.lf { border-right-width: 6px; border-left: 0; }
.bar { flex: 1; height: 3px; background: #6e6e6e; }
.keyb { display: flex; align-items: center; margin-right: 7px; }
.kcirc { width: 41px; height: 41px; border-radius: 50%; background: #2b2b2b; border: 1px solid #1b1b1b; z-index: 1; }
.kdd { width: 16px; height: 22px; background: #3c3c3c; border: 1px solid #1a1a1a; margin: -4px 0 0 -3px; }
.kdd .tri { border-left-width: 3px; border-right-width: 3px; }
.chans { display: grid; grid-template-columns: 24px 154px; gap: 5px; align-content: center; font-size: 11px; }
.cb { height: 24px; background: linear-gradient(#555, #3d3d3d); border: 1px solid #111; }
.cbtn { height: 24px; background: linear-gradient(#525252, #3e3e3e); border-bottom: 1px solid #111; padding: 0 5px 0 17px; justify-content: space-between; }

.status { display: flex; align-items: center; height: 26px; flex: none; background: #191919; font-size: 11px; padding-left: 2px; }
.upd { margin-left: auto; display: flex; align-items: center; align-self: stretch; width: 172px; background: #333; gap: 2px; }
.upd .ib:first-child { margin-left: 2px; }
.upd .menu-sel { flex: 1; height: 25px; align-self: stretch; }
```
